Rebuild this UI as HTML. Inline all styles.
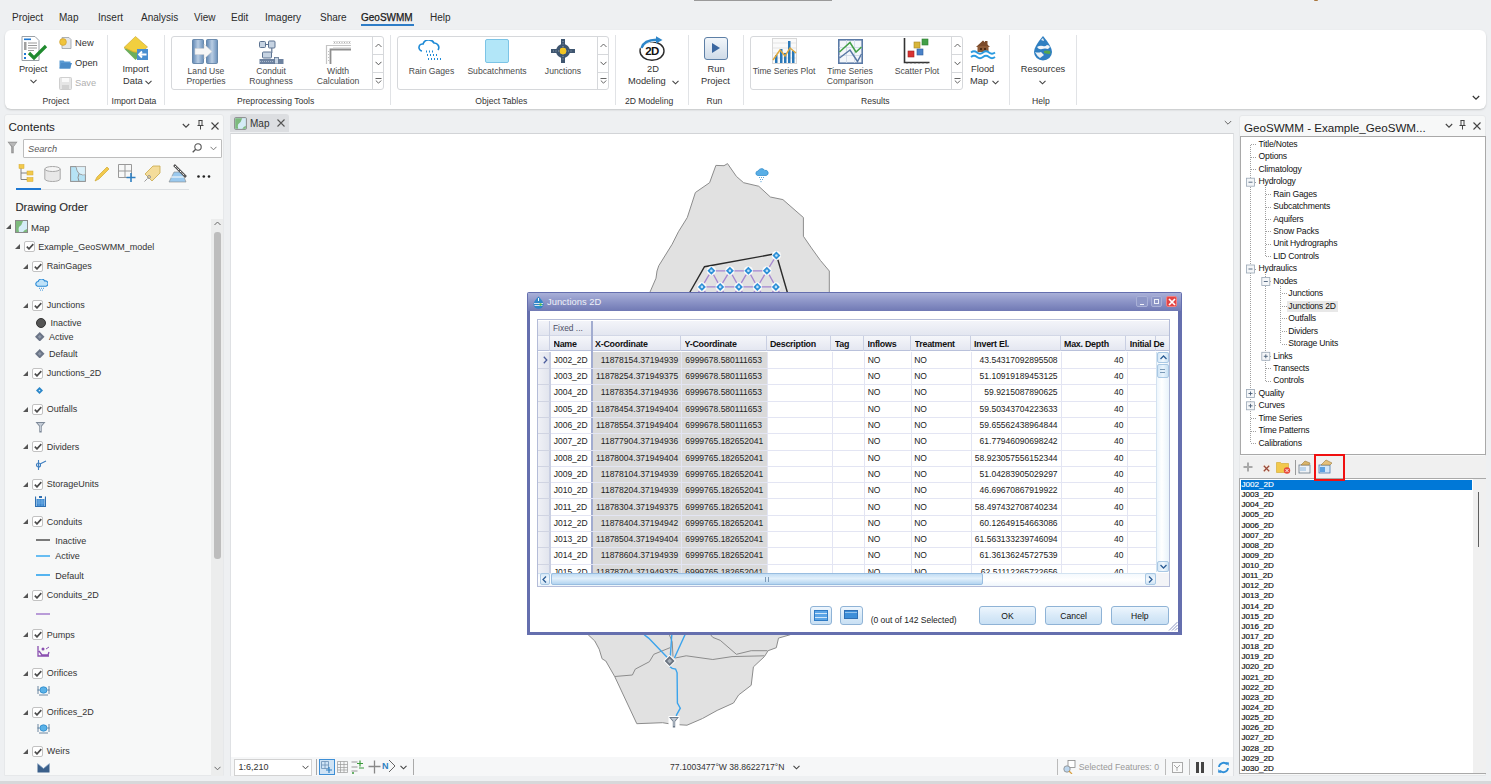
<!DOCTYPE html>
<html><head><meta charset="utf-8">
<style>
*{box-sizing:border-box;margin:0;padding:0}
html,body{width:1491px;height:784px;overflow:hidden;background:#eef0f2;font-family:"Liberation Sans",sans-serif;color:#333;position:relative}
.a{position:absolute;white-space:nowrap}
.menu{font-size:10px;color:#2a2a2a;top:12px}
.rib{left:5px;top:30px;width:1481px;height:78.5px;background:#fff;border-radius:6px;box-shadow:0 1px 2px rgba(0,0,0,.18)}
.gl{font-size:10px;color:#333;top:96px}
.bl{font-size:10px;color:#333;text-align:center}
.sep{width:1px;background:#e1e3e6;top:35px;height:70px}
.gal{border:1px solid #d6d8db;border-radius:3px;background:#fff;top:36px;height:54px}
.gsc{position:absolute;right:0;top:0;width:11px;height:52px;border-left:1px solid #d6d8db}
.gsc i{position:absolute;left:0;width:10px;height:1px;background:#d6d8db}
.gsc b{position:absolute;left:1px;width:9px;text-align:center;font-size:8px;font-weight:normal;color:#444}
.panel{background:#f5f6f7}
.lyr{font-size:10px;color:#333}
.cb{position:absolute;width:11px;height:11px;border:1px solid #9a9a9a;background:#fff;border-radius:1px}
.tri{position:absolute;width:0;height:0;border-left:5px solid transparent;border-bottom:5px solid #555}
.tree{font-family:"Liberation Sans",sans-serif;font-size:9.5px;color:#111}
.jl{font-size:9px;color:#222;font-family:"Liberation Sans",sans-serif}
</style></head>
<body>
<!-- top little scrollbar-like line -->
<div class="a" style="left:694px;top:0;width:138px;height:1px;background:#9a9a9a"></div>
<div class="a" style="left:1313.5px;top:0;width:4.5px;height:1.3px;background:#a9773f;border-radius:0 0 2px 2px"></div>

<div class="a" style="left:0;top:780.8px;width:1491px;height:3.2px;background:#d7d8da"></div>
<!-- MENU -->
<div class="a menu" style="left:12px">Project</div>
<div class="a menu" style="left:59px">Map</div>
<div class="a menu" style="left:98px">Insert</div>
<div class="a menu" style="left:141px">Analysis</div>
<div class="a menu" style="left:194px">View</div>
<div class="a menu" style="left:231px">Edit</div>
<div class="a menu" style="left:265px">Imagery</div>
<div class="a menu" style="left:320px">Share</div>
<div class="a menu" style="left:361px;color:#1a1a1a;-webkit-text-stroke:0.25px #1a1a1a">GeoSWMM</div>
<div class="a" style="left:361px;top:24px;width:53px;height:2px;background:#2e7dc7"></div>
<div class="a menu" style="left:430px">Help</div>

<!-- RIBBON -->
<div class="a rib"></div>

<!-- Project group -->
<svg class="a" style="left:21px;top:36px" width="27" height="25" viewBox="0 0 27 25">
 <path d="M1 0.5h13l4 4v20h-17z" fill="#fff" stroke="#9aa0a6"/>
 <rect x="3" y="2.5" width="7" height="1.6" fill="#1e78d2"/>
 <rect x="3" y="6" width="2.5" height="8" fill="#a0a0a0"/>
 <path d="M7 7h9M7 9.5h9M7 12h9M7 14.5h6" stroke="#9a9a9a" stroke-width="1"/>
 <rect x="3" y="17" width="2" height="2" fill="#1e78d2"/><rect x="3" y="21" width="2" height="2" fill="#1e78d2"/>
 <path d="M8 17l5 5 12-12" fill="none" stroke="#1f8a2e" stroke-width="3.2"/>
</svg>
<div class="a" style="left:19px;top:64px;font-size:9.3px;color:#333;letter-spacing:-0.1px">Project</div>
<svg class="a" style="left:30px;top:79px" width="7" height="5"><path d="M0.5 0.8l3 3 3-3" fill="none" stroke="#444" stroke-width="1.1"/></svg>
<svg class="a" style="left:59px;top:37px" width="13" height="12" viewBox="0 0 13 12">
 <path d="M3 0.5h7l2 2v9h-9z" fill="#e4e6e8" stroke="#9aa0a6" stroke-width="0.8"/>
 <circle cx="4" cy="5" r="3.4" fill="#f0c43c" stroke="#c9982a" stroke-width="0.6"/>
</svg>
<div class="a" style="left:75px;top:37.5px;font-size:9.3px;color:#333">New</div>
<svg class="a" style="left:59px;top:58px" width="13" height="11" viewBox="0 0 13 11">
 <path d="M0.5 2.5h4l1 1h6v7h-11z" fill="#5a9bd4"/><path d="M2 5h11l-2 5.5h-10.5z" fill="#4b8cc8"/>
</svg>
<div class="a" style="left:75px;top:58px;font-size:9.3px;color:#333">Open</div>
<svg class="a" style="left:59px;top:77px" width="13" height="13" viewBox="0 0 13 13">
 <rect x="0.5" y="0.5" width="12" height="12" rx="1" fill="#e6e6e6" stroke="#cfcfcf"/>
 <rect x="3" y="1" width="7" height="4" fill="#fafafa"/><rect x="3" y="8" width="7" height="4" fill="#d2d2d2"/>
</svg>
<div class="a" style="left:75px;top:78px;font-size:9.3px;color:#b0b0b0">Save</div>
<div class="a gl" style="left:42.5px;top:96.4px;font-size:8.6px">Project</div>
<div class="a sep" style="left:107px"></div>

<!-- Import Data -->
<svg class="a" style="left:123px;top:36px" width="26" height="25" viewBox="0 0 26 25">
 <path d="M1 12.5l11.5 11.5 3-3v-8.5h-5z" fill="#6cae5c"/>
 <path d="M1 11.5l11.5-11 12 10.5-6 5h-8z" fill="#f1cf3f" stroke="#caa52a" stroke-width="0.6"/>
 <path d="M1 11.5l11.5 5 6-1" fill="none" stroke="#d8b233" stroke-width="0.6"/>
 <rect x="14" y="13" width="11" height="11" fill="#4a8fd0"/>
 <path d="M23.5 18.5h-7.5M19 15.5l-3 3 3 3" stroke="#fff" stroke-width="1.8" fill="none"/>
</svg>
<div class="a" style="left:122.5px;top:64px;font-size:9.3px;color:#333">Import</div>
<div class="a" style="left:123px;top:75.5px;font-size:9.3px;color:#333">Data</div>
<svg class="a" style="left:145px;top:80px" width="7" height="5"><path d="M0.5 0.8l3 3 3-3" fill="none" stroke="#444" stroke-width="1.1"/></svg>
<div class="a gl" style="left:111.5px;top:96.4px;font-size:8.6px">Import Data</div>
<div class="a sep" style="left:164px"></div>

<!-- Preprocessing gallery -->
<div class="a gal" style="left:171px;width:213px"><div class="gsc"><i style="top:17px"></i><i style="top:35px"></i>
 <svg style="position:absolute;left:2px;top:6px" width="7" height="5"><path d="M0.5 4l3-3 3 3" fill="none" stroke="#555" stroke-width="0.9"/></svg>
 <svg style="position:absolute;left:2px;top:24px" width="7" height="5"><path d="M0.5 0.8l3 3 3-3" fill="none" stroke="#555" stroke-width="1"/></svg>
 <svg style="position:absolute;left:2px;top:41px" width="7" height="7"><path d="M0.5 0.5h6M0.8 2.5l2.7 2.7 2.7-2.7" fill="none" stroke="#555" stroke-width="0.9"/></svg>
</div></div>
<svg class="a" style="left:192px;top:38.5px" width="26" height="25" viewBox="0 0 26 25">
 <defs><linearGradient id="lu" x1="0" x2="1"><stop offset="0" stop-color="#5f86b3"/><stop offset="0.5" stop-color="#b9cde3"/><stop offset="1" stop-color="#6a90bb"/></linearGradient></defs>
 <rect x="0.5" y="0.5" width="11" height="24" rx="1" fill="url(#lu)" stroke="#54789f" stroke-width="0.8"/>
 <rect x="14.5" y="0.5" width="11" height="24" rx="1" fill="url(#lu)" stroke="#54789f" stroke-width="0.8"/>
 <path d="M3 9.5h9v-4.5l8 7.5-8 7.5v-4.5h-9z" fill="#f6f6f6" stroke="#d0d0d0" stroke-width="0.5"/>
</svg>
<div class="a bl" style="left:180px;width:52px;top:67px;font-size:8.6px;line-height:9.6px;color:#4a4a4a">Land Use<br>Properties</div>
<svg class="a" style="left:259px;top:39.5px" width="25" height="24" viewBox="0 0 25 24">
 <rect x="0.5" y="1.5" width="6" height="6" rx="1" fill="#c6d3e2" stroke="#5d7391" stroke-width="1"/>
 <rect x="9.5" y="1" width="6.5" height="7" rx="1" fill="#c6d3e2" stroke="#5d7391" stroke-width="1"/>
 <path d="M6.5 4.5h3M12.8 8v5M9 15h-3" stroke="#5d7391" stroke-width="1.2"/>
 <rect x="3.5" y="12" width="9" height="6" rx="1" fill="#c6d3e2" stroke="#5d7391" stroke-width="1"/>
 <rect x="0.5" y="19" width="24" height="5" fill="#6d82a0"/>
 <path d="M1 21.5h14" stroke="#b8c6d8" stroke-width="0.8" stroke-dasharray="1 1"/>
 <rect x="15.5" y="17.5" width="4" height="6.5" fill="#c6d3e2" stroke="#5d7391" stroke-width="0.8"/>
</svg>
<div class="a bl" style="left:245px;width:52px;top:67px;font-size:8.6px;line-height:9.6px;color:#4a4a4a">Conduit<br>Roughness</div>
<svg class="a" style="left:325px;top:39px" width="26" height="25" viewBox="0 0 26 25">
 <path d="M1.5 25V6.5H26" fill="none" stroke="#c4c4c4" stroke-width="1.2"/>
 <path d="M5.5 25V10.5H26" fill="none" stroke="#8e8e8e" stroke-width="1.8"/>
 <path d="M8 8.5H26" stroke="#e2e2e2" stroke-width="1"/>
 <path d="M8 2.5H26M8 4.5H26" stroke="#d6d6d6" stroke-width="0.8"/>
 <path d="M9 3.5h16" stroke="#9a9a9a" stroke-width="0.8" stroke-dasharray="1 1.5"/>
 <path d="M3.5 12v12" stroke="#a8a8a8" stroke-width="0.7" stroke-dasharray="1 2"/>
</svg>
<div class="a bl" style="left:312px;width:52px;top:67px;font-size:8.6px;line-height:9.6px;color:#4a4a4a">Width<br>Calculation</div>
<div class="a gl" style="left:237px;top:96.4px;font-size:8.6px">Preprocessing Tools</div>
<div class="a sep" style="left:390px"></div>

<!-- Object Tables gallery -->
<div class="a gal" style="left:397px;width:212px"><div class="gsc"><i style="top:17px"></i><i style="top:35px"></i>
 <svg style="position:absolute;left:2px;top:6px" width="7" height="5"><path d="M0.5 4l3-3 3 3" fill="none" stroke="#555" stroke-width="0.9"/></svg>
 <svg style="position:absolute;left:2px;top:24px" width="7" height="5"><path d="M0.5 0.8l3 3 3-3" fill="none" stroke="#555" stroke-width="1"/></svg>
 <svg style="position:absolute;left:2px;top:41px" width="7" height="7"><path d="M0.5 0.5h6M0.8 2.5l2.7 2.7 2.7-2.7" fill="none" stroke="#555" stroke-width="0.9"/></svg>
</div></div>
<svg class="a" style="left:418px;top:40px" width="26" height="22" viewBox="0 0 26 22">
 <path d="M4 11a3.5 3.5 0 0 1 1-7 6 6 0 0 1 11-1 4.5 4.5 0 0 1 4 7" fill="none" stroke="#1e8ad6" stroke-width="1.6"/>
 <path d="M8 11.5h1M11 11.5h1M14 11.5h1M9 15h1M12 15h1M15 15h1M18 15h1M10 19h1M13 19h1M16 19h1M19 19h1M22 19h1" stroke="#1e8ad6" stroke-width="1.8"/>
</svg>
<div class="a bl" style="left:404px;width:55px;top:67px;font-size:8.6px;line-height:9.6px;color:#4a4a4a">Rain Gages</div>
<div class="a" style="left:485px;top:39px;width:24px;height:24px;background:#b2e6f8;border:1px solid #7cc4e6;border-radius:2px"></div>
<div class="a bl" style="left:462px;width:70px;top:67px;font-size:8.6px;line-height:9.6px;color:#4a4a4a">Subcatchments</div>
<svg class="a" style="left:551px;top:39px" width="24" height="24" viewBox="0 0 24 24">
 <path d="M12 0v24M0 12h24" stroke="#3f5670" stroke-width="4"/>
 <circle cx="12" cy="12" r="7" fill="#3f5670"/>
 <circle cx="12" cy="12" r="3.2" fill="#f3c623"/>
 <path d="M12 2v20M2 12h20" stroke="#8ea0b4" stroke-width="1" stroke-dasharray="1 1.5"/>
 <circle cx="12" cy="12" r="3.2" fill="#f3c623"/>
</svg>
<div class="a bl" style="left:538px;width:50px;top:67px;font-size:8.6px;line-height:9.6px;color:#4a4a4a">Junctions</div>
<div class="a gl" style="left:475.3px;top:96.4px;font-size:8.6px">Object Tables</div>
<div class="a sep" style="left:615px"></div>

<!-- 2D modeling -->
<svg class="a" style="left:638px;top:35px" width="28" height="26" viewBox="0 0 28 26">
 <ellipse cx="14" cy="16" rx="12" ry="9.3" fill="#fff" stroke="#2b2b2b" stroke-width="1.4"/>
 <path d="M3.2 13.5q2-8.5 15-8.8" fill="none" stroke="#fff" stroke-width="4"/>
 <path d="M3.5 13q2.5-8 15-8.2" fill="none" stroke="#2e86c9" stroke-width="2.4"/>
 <path d="M18 1.2l6.5 3.8-6.5 3.6z" fill="#2e86c9"/>
 <text x="14" y="20.3" text-anchor="middle" font-family="Liberation Sans" font-weight="bold" font-size="11.5" fill="#111" letter-spacing="-0.5">2D</text>
</svg>
<div class="a" style="left:647px;top:64px;font-size:9.3px;color:#333">2D</div>
<div class="a" style="left:628px;top:75.5px;font-size:9.3px;color:#333">Modeling</div>
<svg class="a" style="left:672px;top:80px" width="7" height="5"><path d="M0.5 0.8l3 3 3-3" fill="none" stroke="#444" stroke-width="1.1"/></svg>
<div class="a gl" style="left:625px;top:96.4px;font-size:8.6px">2D Modeling</div>
<div class="a sep" style="left:688px"></div>

<!-- Run -->
<div class="a" style="left:704px;top:37px;width:24px;height:23px;border:1.6px solid #5d7fa6;border-radius:3px;background:linear-gradient(#f2f6fa,#cfdbe8)"></div>
<svg class="a" style="left:711px;top:42px" width="10" height="12"><path d="M1 1l8 5-8 5z" fill="#3b67a0"/></svg>
<div class="a" style="left:707.5px;top:64px;font-size:9.3px;color:#333">Run</div>
<div class="a" style="left:701px;top:75.5px;font-size:9.3px;color:#333">Project</div>
<div class="a gl" style="left:706.5px;top:96.4px;font-size:8.6px">Run</div>
<div class="a sep" style="left:743px"></div>

<!-- Results gallery -->
<div class="a gal" style="left:750px;width:213px"><div class="gsc"><i style="top:17px"></i><i style="top:35px"></i>
 <svg style="position:absolute;left:2px;top:6px" width="7" height="5"><path d="M0.5 4l3-3 3 3" fill="none" stroke="#555" stroke-width="0.9"/></svg>
 <svg style="position:absolute;left:2px;top:24px" width="7" height="5"><path d="M0.5 0.8l3 3 3-3" fill="none" stroke="#555" stroke-width="1"/></svg>
 <svg style="position:absolute;left:2px;top:41px" width="7" height="7"><path d="M0.5 0.5h6M0.8 2.5l2.7 2.7 2.7-2.7" fill="none" stroke="#555" stroke-width="0.9"/></svg>
</div></div>
<svg class="a" style="left:772px;top:38px" width="25" height="26" viewBox="0 0 25 26">
 <rect x="0.5" y="0.5" width="24" height="25" fill="#fafafa" stroke="#d8d8d8"/>
 <path d="M1 5h23M1 10h23M1 15h23M1 20h23" stroke="#e4e4e4"/>
 <rect x="3" y="17" width="2.5" height="8" fill="#2a78b8"/><rect x="8" y="11" width="2.5" height="14" fill="#2a78b8"/>
 <rect x="12" y="15" width="2.5" height="10" fill="#2a78b8"/><rect x="16" y="3" width="2.5" height="22" fill="#2a78b8"/>
 <rect x="20" y="13" width="2.5" height="12" fill="#2a78b8"/>
 <path d="M1 22l7-10 5 6 5-8 6 5" fill="none" stroke="#e0a83a" stroke-width="1.4"/>
</svg>
<div class="a bl" style="left:749px;width:70px;top:67px;font-size:8.6px;line-height:9.6px;color:#4a4a4a">Time Series Plot</div>
<svg class="a" style="left:838px;top:39px" width="25" height="25" viewBox="0 0 25 25">
 <rect x="0.8" y="0.8" width="23.4" height="23.4" fill="#f3f6fa" stroke="#5b7aa6" stroke-width="1.6"/>
 <path d="M1 8.5h23M1 16.5h23M8.5 1v23M16.5 1v23" stroke="#cdd8e6" stroke-width="0.8"/>
 <path d="M1.5 13L12 3.5 18 13 23.5 8" fill="none" stroke="#43a047" stroke-width="1.5"/>
 <path d="M1.5 19L12 11 19.5 22.5 23.5 15" fill="none" stroke="#5878a4" stroke-width="1.5"/>
</svg>
<div class="a bl" style="left:815px;width:70px;top:67px;font-size:8.6px;line-height:9.6px;color:#4a4a4a">Time Series<br>Comparison</div>
<svg class="a" style="left:903px;top:38px" width="27" height="26" viewBox="0 0 27 26">
 <path d="M1.5 0v24.5h25" fill="none" stroke="#333" stroke-width="1.6"/>
 <path d="M4 24v2M8 24v2M12 24v2M16 24v2M20 24v2M24 24v2" stroke="#555" stroke-width="0.6"/>
 <rect x="11" y="4" width="6" height="6" fill="#d8b63a" stroke="#a5882a" stroke-width="0.6"/>
 <rect x="19" y="1" width="6" height="6" fill="#43a047" stroke="#2e7d32" stroke-width="0.6"/>
 <rect x="5" y="13" width="6" height="6" fill="#d83232" stroke="#a02020" stroke-width="0.6"/>
 <rect x="14" y="11" width="6" height="6" fill="#4a82c8" stroke="#2e5f9e" stroke-width="0.6"/>
</svg>
<div class="a bl" style="left:882px;width:70px;top:67px;font-size:8.6px;line-height:9.6px;color:#4a4a4a">Scatter Plot</div>
<!-- Flood map -->
<svg class="a" style="left:970px;top:38px" width="26" height="24" viewBox="0 0 26 24">
 <path d="M6 9l7-6.5 7 6.5z" fill="#7b4a2a"/>
 <rect x="7.5" y="8" width="11" height="6" fill="#8d5a36"/>
 <rect x="15" y="3" width="2.5" height="4" fill="#7b4a2a"/>
 <rect x="10" y="10" width="2" height="2" fill="#4a2a14"/><rect x="14" y="10" width="2" height="2" fill="#4a2a14"/>
 <path d="M1 14.5q3-2.5 6 0t6 0 6 0 6 0M1 19q3-2.5 6 0t6 0 6 0 6 0" fill="none" stroke="#2b9be0" stroke-width="1.8"/>
</svg>
<div class="a" style="left:971px;top:64px;font-size:9.3px;color:#333">Flood</div>
<div class="a" style="left:970px;top:75.5px;font-size:9.3px;color:#333">Map</div>
<svg class="a" style="left:991.5px;top:80px" width="7" height="5"><path d="M0.5 0.8l3 3 3-3" fill="none" stroke="#444" stroke-width="1.1"/></svg>
<div class="a gl" style="left:861px;top:96.4px;font-size:8.6px">Results</div>
<div class="a sep" style="left:1009px"></div>
<!-- Resources -->
<svg class="a" style="left:1032px;top:35px" width="22" height="26" viewBox="0 0 22 26">
 <path d="M11 1q9 10.5 9 16a9 8.5 0 0 1-18 0q0-5.5 9-16z" fill="#2f7fc1"/>
 <path d="M5 12q3-2 6-1 2 1 4-1 2 0 3 2l-2 2q-3-1-6 0-3 1-5-2z" fill="#f2f5f8"/>
 <path d="M3 17q3 1 6 0l3 3-4 3q-3-2-5-6z" fill="#eaf0f4"/>
 <path d="M12 16q3-1 6 0 1 2 0 3-3 0-6-1z" fill="#56a64e"/>
 <path d="M9 5l2-2 1 3z" fill="#e8eef3"/>
</svg>
<div class="a bl" style="left:1017px;width:52px;top:64px;font-size:9.3px">Resources</div>
<svg class="a" style="left:1039px;top:80px" width="7" height="5"><path d="M0.5 0.8l3 3 3-3" fill="none" stroke="#444" stroke-width="1.1"/></svg>
<div class="a gl" style="left:1032px;top:96.4px;font-size:8.6px">Help</div>
<div class="a sep" style="left:1076px"></div>
<svg class="a" style="left:1472px;top:95px" width="8" height="6"><path d="M0.8 1l3.2 3.2 3.2-3.2" fill="none" stroke="#333" stroke-width="1.2"/></svg>

<!-- CONTENTS -->
<div class="a" style="left:4px;top:114.2px;width:220px;height:662px;background:#f7f8f8;border-radius:3px 3px 0 0;border:1px solid #e6e8ea"></div>
<div class="a" style="left:8.5px;top:120.2px;font-size:11.6px;color:#222">Contents</div>
<svg class="a" style="left:182px;top:123px" width="8" height="6"><path d="M0.8 1l3.2 3.2 3.2-3.2" fill="none" stroke="#444" stroke-width="1.1"/></svg>
<svg class="a" style="left:197px;top:120px" width="7" height="10"><path d="M1.5 0.5h4M2 0.5v5h3v-5M0.5 5.5h6M3.5 5.5v4" fill="none" stroke="#444" stroke-width="1"/></svg>
<svg class="a" style="left:211px;top:122px" width="8" height="8"><path d="M0.5 0.5l7 7M7.5 0.5l-7 7" stroke="#444" stroke-width="1.1"/></svg>
<svg class="a" style="left:6.5px;top:141px" width="11" height="13"><path d="M0.5 0.8h10l-3.8 5v6.5h-2.4v-6.5z" fill="#8a8a8a"/><path d="M1.5 1.5h8l-3 4v6h-1v-6z" fill="#b8b8b8"/></svg>
<div class="a" style="left:23px;top:138.5px;width:199px;height:19px;background:#fff;border:1px solid #bdbdbd;border-radius:1px"></div>
<div class="a" style="left:28px;top:143.6px;font-size:9.2px;font-style:italic;color:#5a5a5a">Search</div>
<svg class="a" style="left:192px;top:143px" width="10" height="10"><circle cx="6" cy="4" r="3.2" fill="none" stroke="#555" stroke-width="1.1"/><path d="M3.7 6.3l-3 3" stroke="#555" stroke-width="1.3"/></svg>
<svg class="a" style="left:210px;top:146px" width="7" height="5"><path d="M0.5 0.8l3 3 3-3" fill="none" stroke="#777" stroke-width="1"/></svg>
<svg class="a" style="left:18px;top:164px" width="20" height="19" viewBox="0 0 20 19">
<rect x="1" y="0.5" width="5" height="4" fill="#f2c94c" stroke="#d4a82a" stroke-width="0.5"/><path d="M3 4.5v11h6M3 9h6" fill="none" stroke="#777" stroke-width="0.9"/>
<rect x="9" y="7" width="6" height="4" fill="#f2c94c" stroke="#d4a82a" stroke-width="0.5"/><rect x="9" y="13.5" width="6" height="4" fill="#f2c94c" stroke="#d4a82a" stroke-width="0.5"/></svg>
<svg class="a" style="left:44px;top:166px" width="17" height="16" viewBox="0 0 17 16"><path d="M0.8 3v10a7.7 2.5 0 0 0 15.4 0v-10" fill="#e8e8e8" stroke="#a8a8a8"/><ellipse cx="8.5" cy="3" rx="7.7" ry="2.5" fill="#f4f4f4" stroke="#a8a8a8"/></svg>
<svg class="a" style="left:69.5px;top:165.5px" width="16" height="16" viewBox="0 0 16 16"><rect x="0.6" y="0.6" width="14.8" height="14.8" fill="#b6e3f5" stroke="#909090"/><path d="M6 0.6q1 5 3 7 4 2 6 1M9 7.6q-2 4 0 7.8" fill="none" stroke="#909090"/><path d="M6 0.6h9.4v8q-2 1-6-1q-2-2-3.4-7z" fill="#fff" opacity="0.5"/></svg>
<svg class="a" style="left:94px;top:166px" width="16" height="16"><path d="M1 15l2-4 10-10 2 2-10 10z" fill="#f2c94c" stroke="#c9a020" stroke-width="0.6"/></svg>
<svg class="a" style="left:118px;top:164px" width="19" height="19"><path d="M0.5 0.5h13v13h-13zM0.5 7h13M7 0.5v13" fill="none" stroke="#999"/><path d="M13 9v9M8.5 13.5h9" stroke="#2f7fc1" stroke-width="1.6"/></svg>
<svg class="a" style="left:144px;top:165px" width="17" height="17"><path d="M1 9l8-8h7v7l-8 8z" fill="#f4dc9a" stroke="#c9a84a" stroke-width="0.8"/><circle cx="5" cy="12" r="1.5" fill="none" stroke="#999"/><path d="M0.5 16.5l3-3" stroke="#999"/></svg>
<svg class="a" style="left:168px;top:164px" width="19" height="19"><path d="M1 18l5-10h8l4 10z" fill="#9ac9ee" stroke="#888" stroke-width="0.6"/><path d="M3 13h13" stroke="#fff"/><path d="M6 1l12 12" stroke="#555" stroke-width="2.5"/><path d="M7 2l10 10" stroke="#fff" stroke-width="1" stroke-dasharray="2 1.5"/></svg>
<svg class="a" style="left:197px;top:175px" width="14" height="3"><circle cx="1.5" cy="1.5" r="1.3" fill="#222"/><circle cx="6.8" cy="1.5" r="1.3" fill="#222"/><circle cx="12" cy="1.5" r="1.3" fill="#222"/></svg>
<div class="a" style="left:15.5px;top:188.5px;width:173px;height:1px;background:#dcdfe2"></div>
<div class="a" style="left:15.5px;top:187.8px;width:25px;height:2.2px;background:#1e78d2"></div>
<div class="a" style="left:15.5px;top:201.2px;font-size:11.3px;color:#2b2b2b;-webkit-text-stroke:0.12px #2b2b2b;letter-spacing:-0.1px">Drawing Order</div>
<div class="a" style="left:211px;top:219px;width:12px;height:557px;background:#eceded"></div>
<svg class="a" style="left:214px;top:221px" width="7" height="5"><path d="M0.5 4l3-3 3 3" fill="none" stroke="#666" stroke-width="1"/></svg>
<div class="a" style="left:214px;top:232px;width:6.5px;height:327px;background:#bdbdbd;border-radius:3px"></div>
<svg class="a" style="left:214px;top:766px" width="7" height="5"><path d="M0.5 0.8l3 3 3-3" fill="none" stroke="#666" stroke-width="1"/></svg>
<svg class="a" style="left:5.8px;top:223.5px" width="5" height="5"><path d="M5 0v5h-5z" fill="#555"/></svg>
<svg class="a" style="left:15px;top:220px" width="13" height="13"><rect x="0.5" y="0.5" width="12" height="12" fill="#d4ecf7" stroke="#888"/><path d="M1 1h7q-1 4-4 6-1 2 0 5h-3z" fill="#7dba7d"/><path d="M12 12h-4q1-2 4-3z" fill="#7dba7d"/></svg>
<div class="a" style="left:31px;top:222px;font-size:9.6px;color:#333">Map</div>
<svg class="a" style="left:14.5px;top:244.0px" width="5" height="5"><path d="M5 0v5h-5z" fill="#555"/></svg><div class="a" style="left:23.5px;top:241.0px;width:11px;height:11px;border:1px solid #c2c2c2;border-radius:2px;background:#fff"></div><svg class="a" style="left:25.5px;top:243.0px" width="8" height="7"><path d="M0.8 3.6l2.2 2.3 4.3-4.8" fill="none" stroke="#4a4a4a" stroke-width="1.6"/></svg><div class="a" style="left:38.3px;top:241.5px;font-size:9.0px;color:#333">Example_GeoSWMM_model</div>
<svg class="a" style="left:23.0px;top:263.9px" width="5" height="5"><path d="M5 0v5h-5z" fill="#555"/></svg><div class="a" style="left:32px;top:260.9px;width:11px;height:11px;border:1px solid #c2c2c2;border-radius:2px;background:#fff"></div><svg class="a" style="left:34px;top:262.9px" width="8" height="7"><path d="M0.8 3.6l2.2 2.3 4.3-4.8" fill="none" stroke="#4a4a4a" stroke-width="1.6"/></svg><div class="a" style="left:46.8px;top:261.4px;font-size:9.0px;color:#333">RainGages</div>
<svg class="a" style="left:35px;top:279px" width="13" height="12"><path d="M2.5 7.2a2.4 2.4 0 0 1 0.6-4.7 3.6 3.6 0 0 1 6.6-0.5 2.5 2.5 0 0 1 1.3 5.2z" fill="#bfe2f8" stroke="#2a8ad6" stroke-width="1.1"/><path d="M4.5 8.8v1M6.5 8.8v1M8.5 8.8v1M5.5 10.6v1M7.5 10.6v1" stroke="#2a8ad6" stroke-width="0.9"/></svg>
<svg class="a" style="left:23.0px;top:302.5px" width="5" height="5"><path d="M5 0v5h-5z" fill="#555"/></svg><div class="a" style="left:32px;top:299.5px;width:11px;height:11px;border:1px solid #c2c2c2;border-radius:2px;background:#fff"></div><svg class="a" style="left:34px;top:301.5px" width="8" height="7"><path d="M0.8 3.6l2.2 2.3 4.3-4.8" fill="none" stroke="#4a4a4a" stroke-width="1.6"/></svg><div class="a" style="left:46.8px;top:300.0px;font-size:9.0px;color:#333">Junctions</div>
<div class="a" style="left:35.6px;top:318px;width:10.4px;height:10.4px;border-radius:50%;background:#555;border:1px solid #333"></div>
<div class="a" style="left:50.4px;top:318.3px;font-size:9.0px;color:#333">Inactive</div>
<svg class="a" style="left:35px;top:331.9px" width="9.5" height="9.5" viewBox="0 0 10 10"><path d="M5 0l5 5-5 5-5-5z" fill="#6b7587"/><path d="M5 3l2 2-2 2-2-2z" fill="#8e98a8"/></svg>
<div class="a" style="left:49px;top:331.7px;font-size:9.0px;color:#333">Active</div>
<svg class="a" style="left:35px;top:348.9px" width="9.5" height="9.5" viewBox="0 0 10 10"><path d="M5 0l5 5-5 5-5-5z" fill="#6b7587"/><path d="M5 3l2 2-2 2-2-2z" fill="#8e98a8"/></svg>
<div class="a" style="left:49px;top:348.6px;font-size:9.0px;color:#333">Default</div>
<svg class="a" style="left:23.0px;top:370.5px" width="5" height="5"><path d="M5 0v5h-5z" fill="#555"/></svg><div class="a" style="left:32px;top:367.5px;width:11px;height:11px;border:1px solid #c2c2c2;border-radius:2px;background:#fff"></div><svg class="a" style="left:34px;top:369.5px" width="8" height="7"><path d="M0.8 3.6l2.2 2.3 4.3-4.8" fill="none" stroke="#4a4a4a" stroke-width="1.6"/></svg><div class="a" style="left:46.8px;top:368.0px;font-size:9.0px;color:#333">Junctions_2D</div>
<svg class="a" style="left:35.5px;top:387px" width="7" height="7" viewBox="0 0 10 10"><path d="M5 0l5 5-5 5-5-5z" fill="#2a86c8"/><circle cx="5" cy="5" r="1.2" fill="#d8eefc"/></svg>
<svg class="a" style="left:23.0px;top:406.9px" width="5" height="5"><path d="M5 0v5h-5z" fill="#555"/></svg><div class="a" style="left:32px;top:403.9px;width:11px;height:11px;border:1px solid #c2c2c2;border-radius:2px;background:#fff"></div><svg class="a" style="left:34px;top:405.9px" width="8" height="7"><path d="M0.8 3.6l2.2 2.3 4.3-4.8" fill="none" stroke="#4a4a4a" stroke-width="1.6"/></svg><div class="a" style="left:46.8px;top:404.4px;font-size:9.0px;color:#333">Outfalls</div>
<svg class="a" style="left:35px;top:421px" width="11" height="12"><path d="M0.5 1h10l-3.8 4.5v6h-2.4v-6z" fill="#7c8897"/><path d="M2.5 2h6l-2.5 3v5h-1v-5z" fill="#c4ccd6"/></svg>
<svg class="a" style="left:23.0px;top:444.3px" width="5" height="5"><path d="M5 0v5h-5z" fill="#555"/></svg><div class="a" style="left:32px;top:441.3px;width:11px;height:11px;border:1px solid #c2c2c2;border-radius:2px;background:#fff"></div><svg class="a" style="left:34px;top:443.3px" width="8" height="7"><path d="M0.8 3.6l2.2 2.3 4.3-4.8" fill="none" stroke="#4a4a4a" stroke-width="1.6"/></svg><div class="a" style="left:46.8px;top:441.8px;font-size:9.0px;color:#333">Dividers</div>
<svg class="a" style="left:35px;top:459px" width="12" height="12"><circle cx="3.5" cy="6" r="2" fill="none" stroke="#3f7fc0" stroke-width="1.2"/><path d="M3.5 1v10M5 5l6-3" stroke="#3f7fc0" stroke-width="1.1"/></svg>
<svg class="a" style="left:23.0px;top:481.5px" width="5" height="5"><path d="M5 0v5h-5z" fill="#555"/></svg><div class="a" style="left:32px;top:478.5px;width:11px;height:11px;border:1px solid #c2c2c2;border-radius:2px;background:#fff"></div><svg class="a" style="left:34px;top:480.5px" width="8" height="7"><path d="M0.8 3.6l2.2 2.3 4.3-4.8" fill="none" stroke="#4a4a4a" stroke-width="1.6"/></svg><div class="a" style="left:46.8px;top:479.0px;font-size:9.0px;color:#333">StorageUnits</div>
<svg class="a" style="left:35px;top:496px" width="11" height="11"><path d="M0.5 0.5v10h10v-10" fill="none" stroke="#2f6fb0" stroke-width="1.2"/><rect x="1.5" y="3" width="8" height="7" fill="#3d88d0"/><path d="M1.5 5h8M1.5 7h8M4 3v7M7 3v7" stroke="#8cc0ec" stroke-width="0.5"/><rect x="4" y="0" width="3" height="2" fill="#2f6fb0"/></svg>
<svg class="a" style="left:23.0px;top:519.0px" width="5" height="5"><path d="M5 0v5h-5z" fill="#555"/></svg><div class="a" style="left:32px;top:516.0px;width:11px;height:11px;border:1px solid #c2c2c2;border-radius:2px;background:#fff"></div><svg class="a" style="left:34px;top:518.0px" width="8" height="7"><path d="M0.8 3.6l2.2 2.3 4.3-4.8" fill="none" stroke="#4a4a4a" stroke-width="1.6"/></svg><div class="a" style="left:46.8px;top:516.5px;font-size:9.0px;color:#333">Conduits</div>
<div class="a" style="left:36px;top:539px;width:13.5px;height:2px;background:#7a7a7a"></div>
<div class="a" style="left:55.3px;top:536.0px;font-size:9.0px;color:#333">Inactive</div>
<div class="a" style="left:36px;top:555px;width:13.5px;height:2px;background:#68bdf2"></div>
<div class="a" style="left:55.3px;top:551.0px;font-size:9.0px;color:#333">Active</div>
<div class="a" style="left:36px;top:574px;width:13.5px;height:2px;background:#55b4f0"></div>
<div class="a" style="left:55.3px;top:570.6px;font-size:9.0px;color:#333">Default</div>
<svg class="a" style="left:23.0px;top:592.5px" width="5" height="5"><path d="M5 0v5h-5z" fill="#555"/></svg><div class="a" style="left:32px;top:589.5px;width:11px;height:11px;border:1px solid #c2c2c2;border-radius:2px;background:#fff"></div><svg class="a" style="left:34px;top:591.5px" width="8" height="7"><path d="M0.8 3.6l2.2 2.3 4.3-4.8" fill="none" stroke="#4a4a4a" stroke-width="1.6"/></svg><div class="a" style="left:46.8px;top:590.0px;font-size:9.0px;color:#333">Conduits_2D</div>
<div class="a" style="left:36px;top:613px;width:13.5px;height:2px;background:#b99cd8"></div>
<svg class="a" style="left:23.0px;top:632.0px" width="5" height="5"><path d="M5 0v5h-5z" fill="#555"/></svg><div class="a" style="left:32px;top:629.0px;width:11px;height:11px;border:1px solid #c2c2c2;border-radius:2px;background:#fff"></div><svg class="a" style="left:34px;top:631.0px" width="8" height="7"><path d="M0.8 3.6l2.2 2.3 4.3-4.8" fill="none" stroke="#4a4a4a" stroke-width="1.6"/></svg><div class="a" style="left:46.8px;top:629.5px;font-size:9.0px;color:#333">Pumps</div>
<svg class="a" style="left:37px;top:645px" width="13" height="12"><path d="M1 1v10h11M2 6l3 4h6l1-3" fill="none" stroke="#8a4fb0" stroke-width="1.3"/><circle cx="6" cy="4" r="1.5" fill="#8a4fb0"/><path d="M9 4l3-2" stroke="#8a4fb0"/></svg>
<svg class="a" style="left:23.0px;top:670.9px" width="5" height="5"><path d="M5 0v5h-5z" fill="#555"/></svg><div class="a" style="left:32px;top:667.9px;width:11px;height:11px;border:1px solid #c2c2c2;border-radius:2px;background:#fff"></div><svg class="a" style="left:34px;top:669.9px" width="8" height="7"><path d="M0.8 3.6l2.2 2.3 4.3-4.8" fill="none" stroke="#4a4a4a" stroke-width="1.6"/></svg><div class="a" style="left:46.8px;top:668.4px;font-size:9.0px;color:#333">Orifices</div>
<svg class="a" style="left:37px;top:684.5px" width="13" height="11"><ellipse cx="6.5" cy="5" rx="3.6" ry="3.2" fill="#5ab2e8" stroke="#2a86c8" stroke-width="0.8"/><path d="M0.5 5h2M10.5 5h2M1 1v8M12 1v8M2 10h9" stroke="#4a6a8a" stroke-width="0.8" fill="none"/></svg>
<svg class="a" style="left:23.0px;top:709.5px" width="5" height="5"><path d="M5 0v5h-5z" fill="#555"/></svg><div class="a" style="left:32px;top:706.5px;width:11px;height:11px;border:1px solid #c2c2c2;border-radius:2px;background:#fff"></div><svg class="a" style="left:34px;top:708.5px" width="8" height="7"><path d="M0.8 3.6l2.2 2.3 4.3-4.8" fill="none" stroke="#4a4a4a" stroke-width="1.6"/></svg><div class="a" style="left:46.8px;top:707.0px;font-size:9.0px;color:#333">Orifices_2D</div>
<svg class="a" style="left:37px;top:723.1px" width="13" height="11"><ellipse cx="6.5" cy="5" rx="3.6" ry="3.2" fill="#5ab2e8" stroke="#2a86c8" stroke-width="0.8"/><path d="M0.5 5h2M10.5 5h2M1 1v8M12 1v8M2 10h9" stroke="#4a6a8a" stroke-width="0.8" fill="none"/></svg>
<svg class="a" style="left:23.0px;top:748.9px" width="5" height="5"><path d="M5 0v5h-5z" fill="#555"/></svg><div class="a" style="left:32px;top:745.9px;width:11px;height:11px;border:1px solid #c2c2c2;border-radius:2px;background:#fff"></div><svg class="a" style="left:34px;top:747.9px" width="8" height="7"><path d="M0.8 3.6l2.2 2.3 4.3-4.8" fill="none" stroke="#4a4a4a" stroke-width="1.6"/></svg><div class="a" style="left:46.8px;top:746.4px;font-size:9.0px;color:#333">Weirs</div>
<svg class="a" style="left:37px;top:763px" width="13" height="10"><path d="M0.5 0.5l6 5 6-5v9h-12z" fill="#3a5f8a"/><path d="M0.5 0.5l6 5 6-5" fill="none" stroke="#7fa0c4" stroke-width="0.7"/></svg>
<!-- MAP VIEW -->
<div class="a" style="left:229.6px;top:114.2px;width:59px;height:18.3px;background:#dcdee1;border-radius:3px 3px 0 0"></div>
<svg class="a" style="left:234px;top:116.5px" width="13" height="13"><rect x="0.6" y="0.6" width="11.8" height="11.8" rx="1" fill="#d4ecf7" stroke="#808080" stroke-width="0.9"/><path d="M1.2 1.2h7q-1 4-4 6-1 2 0 4.6h-3z" fill="#7dba7d"/><path d="M11.8 11.8h-3.5q1-2 3.5-3z" fill="#7dba7d"/></svg>
<div class="a" style="left:250px;top:118px;font-size:10px;color:#333">Map</div>
<svg class="a" style="left:276.5px;top:119px" width="8" height="8"><path d="M0.5 0.5l7 7M7.5 0.5l-7 7" stroke="#555" stroke-width="1.1"/></svg>
<svg class="a" style="left:1224px;top:120px" width="8" height="6"><path d="M0.8 1l3.2 3.2 3.2-3.2" fill="none" stroke="#666" stroke-width="1"/></svg>
<div class="a" style="left:229.6px;top:132.5px;width:1004px;height:643.5px;background:#fff;border:1px solid #dfe1e4;border-top:1px solid #d2d4d7"></div>
<div class="a" style="left:230.5px;top:756.8px;width:1002px;height:19px;background:#f6f7f8"></div>
<div class="a" style="left:234px;top:758.5px;width:78px;height:17px;background:#fff;border:1px solid #d2d2d2"></div>
<div class="a" style="left:238.5px;top:761.5px;font-size:9px;color:#333">1:6,210</div>
<svg class="a" style="left:302px;top:765px" width="7" height="5"><path d="M0.5 0.8l3 3 3-3" fill="none" stroke="#444" stroke-width="1"/></svg>
<div class="a" style="left:315.5px;top:759px;width:1px;height:16px;background:#aaa"></div>
<div class="a" style="left:319px;top:758.5px;width:15.5px;height:16.5px;background:#cfe3f5;border:1px solid #3d8fd6"></div>
<svg class="a" style="left:321px;top:761px" width="12" height="12"><path d="M0.5 0.5h7v7h-7zM0.5 4h7M4 0.5v7" fill="none" stroke="#6a8fb5" stroke-width="0.8"/><path d="M8 6v6M5 9h6" stroke="#2f7fc1" stroke-width="1.2"/></svg>
<svg class="a" style="left:337px;top:761px" width="11" height="12"><path d="M0.5 0.5h10v11h-10zM0.5 3.5h10M0.5 6.5h10M0.5 9h10M3.5 0.5v11M7 0.5v11" fill="none" stroke="#999" stroke-width="0.7"/></svg>
<svg class="a" style="left:351px;top:760px" width="14" height="14"><path d="M0.5 2h6M0.5 7h6M0.5 11h6" stroke="#999" stroke-width="1.2"/><path d="M9 0.5v6M6 3.5h6M8 8h5" stroke="#3a9a3a" stroke-width="1.2"/><circle cx="2" cy="13" r="1" fill="#3a9a3a"/></svg>
<svg class="a" style="left:367.5px;top:760px" width="13" height="14"><path d="M6.5 0.5v13M0.5 6.5h12" stroke="#888" stroke-width="1.3"/></svg>
<div class="a" style="left:382px;top:761px;font-size:9px;font-weight:bold;color:#2f7fc1">N</div>
<svg class="a" style="left:388px;top:759px" width="9" height="15"><path d="M1 1l6 6-6 6" fill="none" stroke="#666" stroke-width="1"/></svg>
<svg class="a" style="left:400px;top:765px" width="7" height="5"><path d="M0.5 0.8l3 3 3-3" fill="none" stroke="#444" stroke-width="1.1"/></svg>
<div class="a" style="left:413px;top:759px;width:1px;height:16px;background:#aaa"></div>
<div class="a" style="left:670px;top:762px;font-size:8.6px;color:#333">77.1003477°W 38.8622717°N</div>
<svg class="a" style="left:792.5px;top:765px" width="7" height="5"><path d="M0.5 0.8l3 3 3-3" fill="none" stroke="#444" stroke-width="1.1"/></svg>
<div class="a" style="left:1057px;top:759px;width:1px;height:16px;background:#bbb"></div>
<svg class="a" style="left:1062px;top:760px" width="14" height="14"><rect x="6" y="0.5" width="7" height="7" fill="#fff" stroke="#888" stroke-width="0.8"/><circle cx="5" cy="9" r="3.2" fill="#bcd6ee" stroke="#888" stroke-width="0.8"/><path d="M7 11l3 3" stroke="#d9a040" stroke-width="1.2"/></svg>
<div class="a" style="left:1078.8px;top:761.8px;font-size:8.7px;color:#999">Selected Features: 0</div>
<div class="a" style="left:1164.5px;top:759px;width:1px;height:16px;background:#bbb"></div>
<svg class="a" style="left:1172px;top:762px" width="11" height="11"><rect x="0.5" y="0.5" width="10" height="10" fill="#fafafa" stroke="#aaa"/><path d="M2 3l3 3v3M8 3l-3 3" stroke="#aaa" fill="none"/></svg>
<div class="a" style="left:1188.7px;top:759px;width:1px;height:16px;background:#bbb"></div>
<div class="a" style="left:1195.5px;top:762px;width:3px;height:11px;background:#444"></div><div class="a" style="left:1201px;top:762px;width:3px;height:11px;background:#444"></div>
<div class="a" style="left:1211.5px;top:759px;width:1px;height:16px;background:#bbb"></div>
<svg class="a" style="left:1216.5px;top:760.5px" width="13" height="13"><path d="M2 6a4.5 4.5 0 0 1 8-2.5M11 7a4.5 4.5 0 0 1-8 2.5" fill="none" stroke="#2f8fd8" stroke-width="1.8"/><path d="M8.5 1l3.5 0.5-0.5 3.5zM4.5 12l-3.5-0.5 0.5-3.5z" fill="#2f8fd8"/></svg>
<!-- MAP GRAPHICS -->
<svg class="a" style="left:0;top:0" width="1491" height="784" viewBox="0 0 1491 784">
<polygon points="649.8,292.5 656,278.2 657,271 658.8,265.7 672.1,244.3 678.4,231.8 687.3,217.5 695.4,192.5 709.6,182.7 715.9,165.4 724,165.7 727.5,163.6 736.4,176.4 743.6,182.7 758.75,186.25 770.4,197 782.9,199.6 803.4,217.5 803.4,236.25 811.4,247.9 820.4,260.4 829.3,271 829.3,292.5 829.3,400 790.3,634.7 790.3,634.7 778.5,638.1 776.3,647.7 768.1,650.7 764.4,656.6 753.4,666.9 751.2,685.3 738.6,695 733.5,703 717.2,710.4 702.5,718.5 687,725.2 673,724.4 662.6,722.7 636.8,723.7 614.7,676.5 605.8,661 602.1,658.8 599.2,649.2 594.8,641 588.1,634.7 600,400" fill="#e1e1e1" stroke="#8c8c8c" stroke-width="1"/>
<polyline points="614.7,676.5 632.4,675 635.3,669.1 649.4,661.7 653.8,654.3 670,647.7" fill="none" stroke="#8c8c8c" stroke-width="1"/>
<polyline points="669.3,634.7 672.2,641.8 673,656.6" fill="none" stroke="#8c8c8c" stroke-width="1"/>
<polyline points="675.2,658 686.2,655.8 712.8,659.5 732,656.6 764.4,655.8" fill="none" stroke="#8c8c8c" stroke-width="1"/>
<polyline points="710.6,634.7 712.8,637.4 720.2,640.3 736.4,654.3 751.2,650.7 767.4,650.7" fill="none" stroke="#8c8c8c" stroke-width="1"/>
<polyline points="644.2,634.7 648.6,638.1 667.1,657.3" fill="none" stroke="#3aa3ec" stroke-width="1.4"/>
<polyline points="671.8,634.7 670.3,656.6" fill="none" stroke="#3aa3ec" stroke-width="1.4"/>
<polyline points="685,634.7 674.4,658" fill="none" stroke="#3aa3ec" stroke-width="1.4"/>
<polyline points="669.3,666.2 672.2,668.4 675.6,669.1 677.1,672.8 677.4,703 680.3,708.2 676.6,714.8 675.9,717.8" fill="none" stroke="#3aa3ec" stroke-width="1.4"/>
<polyline points="689.7,292.5 704.5,266.7 772.6,254.3" fill="none" stroke="#2a2a2a" stroke-width="1.4"/>
<polyline points="777.8,259.5 787.4,292.5" fill="none" stroke="#2a2a2a" stroke-width="1.4"/>
<polyline points="711.4,270.8 729.9,270.8 748.4,270.8 766.9,270.8" fill="none" stroke="#a586cf" stroke-width="1.3"/>
<polyline points="701.9,286.9 720.2,286.9 738.9,286.9 757.4,286.9 775.9,286.9" fill="none" stroke="#a586cf" stroke-width="1.3"/>
<polyline points="701.9,286.9 711.4,270.8 720.2,286.9 729.9,270.8 738.9,286.9 748.4,270.8 757.4,286.9 766.9,270.8 775.9,286.9" fill="none" stroke="#a586cf" stroke-width="1.3"/>
<polyline points="766.9,270.8 776.4,255.5" fill="none" stroke="#a586cf" stroke-width="1.3"/>
<path d="M699.9,289.9 L696.9,294.9 M703.9,289.9 L706.9,294.9" stroke="#a586cf" stroke-width="1.2"/>
<path d="M718.2,289.9 L715.2,294.9 M722.2,289.9 L725.2,294.9" stroke="#a586cf" stroke-width="1.2"/>
<path d="M736.9,289.9 L733.9,294.9 M740.9,289.9 L743.9,294.9" stroke="#a586cf" stroke-width="1.2"/>
<path d="M755.4,289.9 L752.4,294.9 M759.4,289.9 L762.4,294.9" stroke="#a586cf" stroke-width="1.2"/>
<path d="M773.9,289.9 L770.9,294.9 M777.9,289.9 L780.9,294.9" stroke="#a586cf" stroke-width="1.2"/>
<circle cx="711.4" cy="270.8" r="4.6" fill="#fff" opacity="0.9"/><path d="M711.4,266.8 L715.4,270.8 L711.4,274.8 L707.4,270.8z" fill="#2b8fd6"/><circle cx="711.4" cy="270.8" r="1.3" fill="#bfe3fb"/>
<circle cx="729.9" cy="270.8" r="4.6" fill="#fff" opacity="0.9"/><path d="M729.9,266.8 L733.9,270.8 L729.9,274.8 L725.9,270.8z" fill="#2b8fd6"/><circle cx="729.9" cy="270.8" r="1.3" fill="#bfe3fb"/>
<circle cx="748.4" cy="270.8" r="4.6" fill="#fff" opacity="0.9"/><path d="M748.4,266.8 L752.4,270.8 L748.4,274.8 L744.4,270.8z" fill="#2b8fd6"/><circle cx="748.4" cy="270.8" r="1.3" fill="#bfe3fb"/>
<circle cx="766.9" cy="270.8" r="4.6" fill="#fff" opacity="0.9"/><path d="M766.9,266.8 L770.9,270.8 L766.9,274.8 L762.9,270.8z" fill="#2b8fd6"/><circle cx="766.9" cy="270.8" r="1.3" fill="#bfe3fb"/>
<circle cx="701.9" cy="286.9" r="4.6" fill="#fff" opacity="0.9"/><path d="M701.9,282.9 L705.9,286.9 L701.9,290.9 L697.9,286.9z" fill="#2b8fd6"/><circle cx="701.9" cy="286.9" r="1.3" fill="#bfe3fb"/>
<circle cx="720.2" cy="286.9" r="4.6" fill="#fff" opacity="0.9"/><path d="M720.2,282.9 L724.2,286.9 L720.2,290.9 L716.2,286.9z" fill="#2b8fd6"/><circle cx="720.2" cy="286.9" r="1.3" fill="#bfe3fb"/>
<circle cx="738.9" cy="286.9" r="4.6" fill="#fff" opacity="0.9"/><path d="M738.9,282.9 L742.9,286.9 L738.9,290.9 L734.9,286.9z" fill="#2b8fd6"/><circle cx="738.9" cy="286.9" r="1.3" fill="#bfe3fb"/>
<circle cx="757.4" cy="286.9" r="4.6" fill="#fff" opacity="0.9"/><path d="M757.4,282.9 L761.4,286.9 L757.4,290.9 L753.4,286.9z" fill="#2b8fd6"/><circle cx="757.4" cy="286.9" r="1.3" fill="#bfe3fb"/>
<circle cx="775.9" cy="286.9" r="4.6" fill="#fff" opacity="0.9"/><path d="M775.9,282.9 L779.9,286.9 L775.9,290.9 L771.9,286.9z" fill="#2b8fd6"/><circle cx="775.9" cy="286.9" r="1.3" fill="#bfe3fb"/>
<circle cx="776.4" cy="255.5" r="4.6" fill="#fff" opacity="0.9"/><path d="M776.4,251.5 L780.4,255.5 L776.4,259.5 L772.4,255.5z" fill="#2b8fd6"/><circle cx="776.4" cy="255.5" r="1.3" fill="#bfe3fb"/>
<rect x="665.1" y="656.5" width="9" height="9" fill="#fff" transform="rotate(45 669.6 661)"/>
<path d="M669.6,656 L674.6,661 L669.6,666 L664.6,661z" fill="#6b7480"/><path d="M669.6,658.5 L672,661 L669.6,663.5 L667.2,661z" fill="#a8b0ba"/>
<rect x="668.5" y="716" width="11" height="12" fill="#fff"/>
<path d="M669,717 h10 l-3.8,4.5 v6 h-2.4 v-6z" fill="#6f7b8a"/><path d="M671,718 h6 l-2.4,3 v5 h-1.2 v-5z" fill="#c0c8d2"/>
<path d="M757.5,175.5 a2.3,2.3 0 0 1 0.7-4.5 a3.6,3.6 0 0 1 6.5-0.6 a2.4,2.4 0 0 1 1.6,5.1z" fill="#58aee6" stroke="#2a86c8" stroke-width="0.7"/><path d="M759.5,177 v1 M761.5,177 v1 M763.5,177 v1 M760.5,179 v1 M762.5,179 v1 M761,181 v1.2" stroke="#3a90d0" stroke-width="0.8"/></svg>
<!-- RIGHT PANEL -->
<div class="a" style="left:1238.8px;top:114.6px;width:247.6px;height:661.4px;background:#f7f8f8;border:1px solid #e6e8ea;border-radius:3px 3px 0 0"></div>
<div class="a" style="left:1244px;top:121px;font-size:11.6px;color:#222">GeoSWMM - Example_GeoSWM...</div>
<svg class="a" style="left:1444.5px;top:123px" width="8" height="6"><path d="M0.8 1l3.2 3.2 3.2-3.2" fill="none" stroke="#444" stroke-width="1.1"/></svg>
<svg class="a" style="left:1459px;top:120px" width="7" height="10"><path d="M1.5 0.5h4M2 0.5v5h3v-5M0.5 5.5h6M3.5 5.5v4" fill="none" stroke="#444" stroke-width="1"/></svg>
<svg class="a" style="left:1473px;top:121.5px" width="8" height="8"><path d="M0.5 0.5l7 7M7.5 0.5l-7 7" stroke="#444" stroke-width="1.1"/></svg>
<div class="a" style="left:1239.5px;top:136.4px;width:246.5px;height:319px;background:#fff;border:1px solid #a9a9a9"></div>
<div class="a" style="left:1287px;top:300.5px;width:51px;height:11px;background:#e8e8e8"></div>
<svg class="a" style="left:0;top:0" width="1491" height="784">
<path d="M1250.5 145 V443 M1265.5 187 V257 M1265.5 274 V381 M1280.5 286 V344" stroke="#a0a0a0" stroke-width="1" stroke-dasharray="1 1" fill="none"/>
<path d="M1251 144.5 H1257" stroke="#a0a0a0" stroke-width="1" stroke-dasharray="1 1"/>
<path d="M1251 157.5 H1257" stroke="#a0a0a0" stroke-width="1" stroke-dasharray="1 1"/>
<path d="M1251 169.5 H1257" stroke="#a0a0a0" stroke-width="1" stroke-dasharray="1 1"/>
<path d="M1251 182.5 H1257" stroke="#a0a0a0" stroke-width="1" stroke-dasharray="1 1"/>
<rect x="1246.5" y="178.2" width="8" height="8" fill="#f4f6f8" stroke="#9aa7b5" stroke-width="0.8"/>
<path d="M1248.5 182.2 H1252.5" stroke="#4a5f78" stroke-width="0.9"/>
<path d="M1266 194.5 H1272" stroke="#a0a0a0" stroke-width="1" stroke-dasharray="1 1"/>
<path d="M1266 207.5 H1272" stroke="#a0a0a0" stroke-width="1" stroke-dasharray="1 1"/>
<path d="M1266 219.5 H1272" stroke="#a0a0a0" stroke-width="1" stroke-dasharray="1 1"/>
<path d="M1266 231.5 H1272" stroke="#a0a0a0" stroke-width="1" stroke-dasharray="1 1"/>
<path d="M1266 244.5 H1272" stroke="#a0a0a0" stroke-width="1" stroke-dasharray="1 1"/>
<path d="M1266 256.5 H1272" stroke="#a0a0a0" stroke-width="1" stroke-dasharray="1 1"/>
<path d="M1251 269.5 H1257" stroke="#a0a0a0" stroke-width="1" stroke-dasharray="1 1"/>
<rect x="1246.5" y="265.0" width="8" height="8" fill="#f4f6f8" stroke="#9aa7b5" stroke-width="0.8"/>
<path d="M1248.5 269.0 H1252.5" stroke="#4a5f78" stroke-width="0.9"/>
<path d="M1266 281.5 H1272" stroke="#a0a0a0" stroke-width="1" stroke-dasharray="1 1"/>
<rect x="1261.8" y="277.5" width="8" height="8" fill="#f4f6f8" stroke="#9aa7b5" stroke-width="0.8"/>
<path d="M1263.8 281.5 H1267.8" stroke="#4a5f78" stroke-width="0.9"/>
<path d="M1282 293.5 H1287" stroke="#a0a0a0" stroke-width="1" stroke-dasharray="1 1"/>
<path d="M1282 306.5 H1287" stroke="#a0a0a0" stroke-width="1" stroke-dasharray="1 1"/>
<path d="M1282 318.5 H1287" stroke="#a0a0a0" stroke-width="1" stroke-dasharray="1 1"/>
<path d="M1282 331.5 H1287" stroke="#a0a0a0" stroke-width="1" stroke-dasharray="1 1"/>
<path d="M1282 344.5 H1287" stroke="#a0a0a0" stroke-width="1" stroke-dasharray="1 1"/>
<path d="M1266 356.5 H1272" stroke="#a0a0a0" stroke-width="1" stroke-dasharray="1 1"/>
<rect x="1261.8" y="352.3" width="8" height="8" fill="#f4f6f8" stroke="#9aa7b5" stroke-width="0.8"/>
<path d="M1263.8 356.3 H1267.8" stroke="#4a5f78" stroke-width="0.9"/>
<path d="M1265.8 354.3 V358.3" stroke="#4a5f78" stroke-width="0.9"/>
<path d="M1266 368.5 H1272" stroke="#a0a0a0" stroke-width="1" stroke-dasharray="1 1"/>
<path d="M1266 381.5 H1272" stroke="#a0a0a0" stroke-width="1" stroke-dasharray="1 1"/>
<path d="M1251 393.5 H1257" stroke="#a0a0a0" stroke-width="1" stroke-dasharray="1 1"/>
<rect x="1246.5" y="389.5" width="8" height="8" fill="#f4f6f8" stroke="#9aa7b5" stroke-width="0.8"/>
<path d="M1248.5 393.5 H1252.5" stroke="#4a5f78" stroke-width="0.9"/>
<path d="M1250.5 391.5 V395.5" stroke="#4a5f78" stroke-width="0.9"/>
<path d="M1251 405.5 H1257" stroke="#a0a0a0" stroke-width="1" stroke-dasharray="1 1"/>
<rect x="1246.5" y="401.8" width="8" height="8" fill="#f4f6f8" stroke="#9aa7b5" stroke-width="0.8"/>
<path d="M1248.5 405.8 H1252.5" stroke="#4a5f78" stroke-width="0.9"/>
<path d="M1250.5 403.8 V407.8" stroke="#4a5f78" stroke-width="0.9"/>
<path d="M1251 418.5 H1257" stroke="#a0a0a0" stroke-width="1" stroke-dasharray="1 1"/>
<path d="M1251 431.5 H1257" stroke="#a0a0a0" stroke-width="1" stroke-dasharray="1 1"/>
<path d="M1251 443.5 H1257" stroke="#a0a0a0" stroke-width="1" stroke-dasharray="1 1"/>
</svg>
<div class="a tree" style="left:1258.6px;top:138.7px;font-size:8.6px;color:#111;letter-spacing:-0.18px">Title/Notes</div>
<div class="a tree" style="left:1258.6px;top:151.3px;font-size:8.6px;color:#111;letter-spacing:-0.18px">Options</div>
<div class="a tree" style="left:1258.6px;top:163.7px;font-size:8.6px;color:#111;letter-spacing:-0.18px">Climatology</div>
<div class="a tree" style="left:1258.6px;top:176.4px;font-size:8.6px;color:#111;letter-spacing:-0.18px">Hydrology</div>
<div class="a tree" style="left:1273.3px;top:188.7px;font-size:8.6px;color:#111;letter-spacing:-0.18px">Rain Gages</div>
<div class="a tree" style="left:1273.3px;top:201.2px;font-size:8.6px;color:#111;letter-spacing:-0.18px">Subcatchments</div>
<div class="a tree" style="left:1273.3px;top:213.6px;font-size:8.6px;color:#111;letter-spacing:-0.18px">Aquifers</div>
<div class="a tree" style="left:1273.3px;top:226.0px;font-size:8.6px;color:#111;letter-spacing:-0.18px">Snow Packs</div>
<div class="a tree" style="left:1273.3px;top:238.4px;font-size:8.6px;color:#111;letter-spacing:-0.18px">Unit Hydrographs</div>
<div class="a tree" style="left:1273.3px;top:251.0px;font-size:8.6px;color:#111;letter-spacing:-0.18px">LID Controls</div>
<div class="a tree" style="left:1258.6px;top:263.2px;font-size:8.6px;color:#111;letter-spacing:-0.18px">Hydraulics</div>
<div class="a tree" style="left:1273.3px;top:275.7px;font-size:8.6px;color:#111;letter-spacing:-0.18px">Nodes</div>
<div class="a tree" style="left:1288.3px;top:288.1px;font-size:8.6px;color:#111;letter-spacing:-0.18px">Junctions</div>
<div class="a tree" style="left:1288.3px;top:300.7px;font-size:8.6px;color:#111;letter-spacing:-0.18px">Junctions 2D</div>
<div class="a tree" style="left:1288.3px;top:313.0px;font-size:8.6px;color:#111;letter-spacing:-0.18px">Outfalls</div>
<div class="a tree" style="left:1288.3px;top:325.7px;font-size:8.6px;color:#111;letter-spacing:-0.18px">Dividers</div>
<div class="a tree" style="left:1288.3px;top:338.2px;font-size:8.6px;color:#111;letter-spacing:-0.18px">Storage Units</div>
<div class="a tree" style="left:1273.3px;top:350.5px;font-size:8.6px;color:#111;letter-spacing:-0.18px">Links</div>
<div class="a tree" style="left:1273.3px;top:363.1px;font-size:8.6px;color:#111;letter-spacing:-0.18px">Transects</div>
<div class="a tree" style="left:1273.3px;top:375.4px;font-size:8.6px;color:#111;letter-spacing:-0.18px">Controls</div>
<div class="a tree" style="left:1258.6px;top:387.7px;font-size:8.6px;color:#111;letter-spacing:-0.18px">Quality</div>
<div class="a tree" style="left:1258.6px;top:400.0px;font-size:8.6px;color:#111;letter-spacing:-0.18px">Curves</div>
<div class="a tree" style="left:1258.6px;top:412.7px;font-size:8.6px;color:#111;letter-spacing:-0.18px">Time Series</div>
<div class="a tree" style="left:1258.6px;top:425.2px;font-size:8.6px;color:#111;letter-spacing:-0.18px">Time Patterns</div>
<div class="a tree" style="left:1258.6px;top:437.5px;font-size:8.6px;color:#111;letter-spacing:-0.18px">Calibrations</div>
<div class="a" style="left:1239.5px;top:455.5px;width:246.5px;height:23px;background:#f0f0f0"></div>
<svg class="a" style="left:1243px;top:462px" width="10" height="10"><path d="M5 0.5v9M0.5 5h9" stroke="#a8a8a8" stroke-width="2"/></svg>
<svg class="a" style="left:1261.5px;top:463.5px" width="9" height="9"><circle cx="4.5" cy="4.5" r="4.3" fill="#f4ece4"/><path d="M1.8 1.8l5.4 5.4M7.2 1.8l-5.4 5.4" stroke="#9a4a3a" stroke-width="1.3"/></svg>
<svg class="a" style="left:1276px;top:460px" width="15" height="14"><path d="M0.5 2.5h4l1 1h7v9h-12z" fill="#f2c94c" stroke="#d2a628" stroke-width="0.6"/><circle cx="11" cy="10.5" r="3.2" fill="#e74c3c"/><path d="M9.5 9l3 3M12.5 9l-3 3" stroke="#fff" stroke-width="0.9"/></svg>
<div class="a" style="left:1294.5px;top:460px;width:1px;height:15px;background:#9a9a9a"></div>
<svg class="a" style="left:1298px;top:460px" width="14" height="14"><rect x="1" y="5" width="11" height="8" fill="#eef2f6" stroke="#6a7a8a" stroke-width="0.8"/><path d="M3 5l4-4 5 2-1 2z" fill="#d9b46a" stroke="#9a7a3a" stroke-width="0.6"/><rect x="2" y="7" width="6" height="4" fill="#bcd4ea"/></svg>
<svg class="a" style="left:1318px;top:459px" width="15" height="15"><rect x="1" y="6" width="11" height="8" fill="#d2e6f8" stroke="#4a7ab0" stroke-width="0.8"/><path d="M3 6l5-5 6 3-2 2z" fill="#e5c07a" stroke="#9a7a3a" stroke-width="0.6"/><rect x="2" y="8" width="5" height="5" fill="#5aa0e0"/></svg>

<div class="a" style="left:1239.4px;top:478.4px;width:247px;height:296px;background:#fff;border:1px solid #a9a9a9"></div>
<div class="a" style="left:1473px;top:479.4px;width:12.5px;height:294px;background:#f0f0f0"></div>
<div class="a" style="left:1241px;top:479.8px;width:230.6px;height:10px;background:#0078d7"></div>
<div class="a" style="left:1478px;top:492.4px;width:1.3px;height:55px;background:#606060"></div>
<div class="a" style="left:1241.4px;top:479.9px;font-size:8.1px;color:#fff;line-height:9px;-webkit-text-stroke:0.15px #fff">J002_2D</div>
<div class="a" style="left:1241.4px;top:490.0px;font-size:8.1px;color:#151515;line-height:9px;-webkit-text-stroke:0.2px #151515">J003_2D</div>
<div class="a" style="left:1241.4px;top:500.2px;font-size:8.1px;color:#151515;line-height:9px;-webkit-text-stroke:0.2px #151515">J004_2D</div>
<div class="a" style="left:1241.4px;top:510.3px;font-size:8.1px;color:#151515;line-height:9px;-webkit-text-stroke:0.2px #151515">J005_2D</div>
<div class="a" style="left:1241.4px;top:520.5px;font-size:8.1px;color:#151515;line-height:9px;-webkit-text-stroke:0.2px #151515">J006_2D</div>
<div class="a" style="left:1241.4px;top:530.6px;font-size:8.1px;color:#151515;line-height:9px;-webkit-text-stroke:0.2px #151515">J007_2D</div>
<div class="a" style="left:1241.4px;top:540.7px;font-size:8.1px;color:#151515;line-height:9px;-webkit-text-stroke:0.2px #151515">J008_2D</div>
<div class="a" style="left:1241.4px;top:550.9px;font-size:8.1px;color:#151515;line-height:9px;-webkit-text-stroke:0.2px #151515">J009_2D</div>
<div class="a" style="left:1241.4px;top:561.0px;font-size:8.1px;color:#151515;line-height:9px;-webkit-text-stroke:0.2px #151515">J010_2D</div>
<div class="a" style="left:1241.4px;top:571.2px;font-size:8.1px;color:#151515;line-height:9px;-webkit-text-stroke:0.2px #151515">J011_2D</div>
<div class="a" style="left:1241.4px;top:581.3px;font-size:8.1px;color:#151515;line-height:9px;-webkit-text-stroke:0.2px #151515">J012_2D</div>
<div class="a" style="left:1241.4px;top:591.4px;font-size:8.1px;color:#151515;line-height:9px;-webkit-text-stroke:0.2px #151515">J013_2D</div>
<div class="a" style="left:1241.4px;top:601.6px;font-size:8.1px;color:#151515;line-height:9px;-webkit-text-stroke:0.2px #151515">J014_2D</div>
<div class="a" style="left:1241.4px;top:611.7px;font-size:8.1px;color:#151515;line-height:9px;-webkit-text-stroke:0.2px #151515">J015_2D</div>
<div class="a" style="left:1241.4px;top:621.9px;font-size:8.1px;color:#151515;line-height:9px;-webkit-text-stroke:0.2px #151515">J016_2D</div>
<div class="a" style="left:1241.4px;top:632.0px;font-size:8.1px;color:#151515;line-height:9px;-webkit-text-stroke:0.2px #151515">J017_2D</div>
<div class="a" style="left:1241.4px;top:642.1px;font-size:8.1px;color:#151515;line-height:9px;-webkit-text-stroke:0.2px #151515">J018_2D</div>
<div class="a" style="left:1241.4px;top:652.3px;font-size:8.1px;color:#151515;line-height:9px;-webkit-text-stroke:0.2px #151515">J019_2D</div>
<div class="a" style="left:1241.4px;top:662.4px;font-size:8.1px;color:#151515;line-height:9px;-webkit-text-stroke:0.2px #151515">J020_2D</div>
<div class="a" style="left:1241.4px;top:672.6px;font-size:8.1px;color:#151515;line-height:9px;-webkit-text-stroke:0.2px #151515">J021_2D</div>
<div class="a" style="left:1241.4px;top:682.7px;font-size:8.1px;color:#151515;line-height:9px;-webkit-text-stroke:0.2px #151515">J022_2D</div>
<div class="a" style="left:1241.4px;top:692.8px;font-size:8.1px;color:#151515;line-height:9px;-webkit-text-stroke:0.2px #151515">J023_2D</div>
<div class="a" style="left:1241.4px;top:703.0px;font-size:8.1px;color:#151515;line-height:9px;-webkit-text-stroke:0.2px #151515">J024_2D</div>
<div class="a" style="left:1241.4px;top:713.1px;font-size:8.1px;color:#151515;line-height:9px;-webkit-text-stroke:0.2px #151515">J025_2D</div>
<div class="a" style="left:1241.4px;top:723.3px;font-size:8.1px;color:#151515;line-height:9px;-webkit-text-stroke:0.2px #151515">J026_2D</div>
<div class="a" style="left:1241.4px;top:733.4px;font-size:8.1px;color:#151515;line-height:9px;-webkit-text-stroke:0.2px #151515">J027_2D</div>
<div class="a" style="left:1241.4px;top:743.5px;font-size:8.1px;color:#151515;line-height:9px;-webkit-text-stroke:0.2px #151515">J028_2D</div>
<div class="a" style="left:1241.4px;top:753.7px;font-size:8.1px;color:#151515;line-height:9px;-webkit-text-stroke:0.2px #151515">J029_2D</div>
<div class="a" style="left:1241.4px;top:763.8px;font-size:8.1px;color:#151515;line-height:9px;-webkit-text-stroke:0.2px #151515">J030_2D</div>
<!-- DIALOG -->
<div class="a" style="left:526.5px;top:292.3px;width:655px;height:342.7px;background:#656fae;border-radius:2px 2px 0 0"></div>
<div class="a" style="left:527.5px;top:293.3px;width:653px;height:17.7px;background:linear-gradient(#a9b0d8,#8e96c8 45%,#7079b4)"></div>
<div class="a" style="left:530px;top:311px;width:648px;height:320.5px;background:#fff"></div>
<svg class="a" style="left:532.5px;top:295.5px" width="11" height="13" viewBox="0 0 11 13">
<path d="M5.5 0.5q5 5 5 8a5 4.2 0 0 1-10 0q0-3 5-8z" fill="#2f86c8"/>
<path d="M1 7.5h9M1.5 9.5h8" stroke="#d8e4ee" stroke-width="1"/><circle cx="7.5" cy="8.5" r="1.2" fill="#4cc04c"/><path d="M5.5 2v3" stroke="#fff" stroke-width="1"/></svg>
<div class="a" style="left:547px;top:296.3px;font-size:9.4px;color:#eef0f8">Junctions 2D</div>
<div class="a" style="left:1136.4px;top:296.2px;width:11.2px;height:11.2px;background:#8d96c6;border:1px solid #a9b0d6;border-radius:2px"></div>
<div class="a" style="left:1139.5px;top:303.5px;width:4px;height:1.5px;background:#f4f4fa"></div>
<div class="a" style="left:1151px;top:296.2px;width:11.2px;height:11.2px;background:#8d96c6;border:1px solid #a9b0d6;border-radius:2px"></div>
<div class="a" style="left:1153.8px;top:299px;width:5.6px;height:5.2px;border:1px solid #eef0f8;border-top-width:1.6px"></div>
<div class="a" style="left:1165.7px;top:296.2px;width:11.7px;height:11.2px;background:#e34444;border:1px solid #f08080;border-radius:2px"></div>
<svg class="a" style="left:1167.5px;top:297.8px" width="8" height="8"><path d="M1 1l6 6M7 1l-6 6" stroke="#fff" stroke-width="1.7"/></svg>
<div class="a" style="left:537.4px;top:319.4px;width:632.6px;height:267.4px;background:#fff;border:1px solid #b4bcd8"></div>
<div class="a" style="left:538.4px;top:320.5px;width:630.6px;height:15.800000000000011px;background:linear-gradient(#f3f4f9,#e3e6f0);border-bottom:1px solid #d2d7e6"></div>
<div class="a" style="left:539.5px;top:320.5px;width:10.700000000000045px;height:15.800000000000011px;border-right:1px solid #c9cfe2"></div>
<div class="a" style="left:553px;top:322.5px;font-size:8.4px;color:#4c4f66">Fixed ...</div>
<div class="a" style="left:538.4px;top:336.3px;width:630.6px;height:15.199999999999989px;background:linear-gradient(#f5f6fa,#e4e7f1);border-bottom:1px solid #b9c1db"></div>
<div class="a" style="left:539.5px;top:336.3px;width:10.700000000000045px;height:15.199999999999989px;border-right:1px solid #c9cfe2"></div>
<div class="a" style="left:550.2px;top:336.3px;width:41.5px;height:15.199999999999989px;border-right:1px solid #c9cfe2"></div>
<div class="a" style="left:553.5px;top:338.5px;font-size:8.9px;font-weight:bold;color:#111;letter-spacing:-0.25px;overflow:hidden;width:38.5px">Name</div>
<div class="a" style="left:591.7px;top:336.3px;width:89.5px;height:15.199999999999989px;border-right:1px solid #c9cfe2"></div>
<div class="a" style="left:595.0px;top:338.5px;font-size:8.9px;font-weight:bold;color:#111;letter-spacing:-0.25px;overflow:hidden;width:86.5px">X-Coordinate</div>
<div class="a" style="left:681.2px;top:336.3px;width:85.39999999999998px;height:15.199999999999989px;border-right:1px solid #c9cfe2"></div>
<div class="a" style="left:684.5px;top:338.5px;font-size:8.9px;font-weight:bold;color:#111;letter-spacing:-0.25px;overflow:hidden;width:82.39999999999998px">Y-Coordinate</div>
<div class="a" style="left:766.6px;top:336.3px;width:64.89999999999998px;height:15.199999999999989px;border-right:1px solid #c9cfe2"></div>
<div class="a" style="left:769.9px;top:338.5px;font-size:8.9px;font-weight:bold;color:#111;letter-spacing:-0.25px;overflow:hidden;width:61.89999999999998px">Description</div>
<div class="a" style="left:831.5px;top:336.3px;width:32.700000000000045px;height:15.199999999999989px;border-right:1px solid #c9cfe2"></div>
<div class="a" style="left:834.8px;top:338.5px;font-size:8.9px;font-weight:bold;color:#111;letter-spacing:-0.25px;overflow:hidden;width:29.700000000000045px">Tag</div>
<div class="a" style="left:864.2px;top:336.3px;width:47.09999999999991px;height:15.199999999999989px;border-right:1px solid #c9cfe2"></div>
<div class="a" style="left:867.5px;top:338.5px;font-size:8.9px;font-weight:bold;color:#111;letter-spacing:-0.25px;overflow:hidden;width:44.09999999999991px">Inflows</div>
<div class="a" style="left:911.3px;top:336.3px;width:59.5px;height:15.199999999999989px;border-right:1px solid #c9cfe2"></div>
<div class="a" style="left:914.5999999999999px;top:338.5px;font-size:8.9px;font-weight:bold;color:#111;letter-spacing:-0.25px;overflow:hidden;width:56.5px">Treatment</div>
<div class="a" style="left:970.8px;top:336.3px;width:89.90000000000009px;height:15.199999999999989px;border-right:1px solid #c9cfe2"></div>
<div class="a" style="left:974.0999999999999px;top:338.5px;font-size:8.9px;font-weight:bold;color:#111;letter-spacing:-0.25px;overflow:hidden;width:86.90000000000009px">Invert El.</div>
<div class="a" style="left:1060.7px;top:336.3px;width:65.79999999999995px;height:15.199999999999989px;border-right:1px solid #c9cfe2"></div>
<div class="a" style="left:1064.0px;top:338.5px;font-size:8.9px;font-weight:bold;color:#111;letter-spacing:-0.25px;overflow:hidden;width:62.799999999999955px">Max. Depth</div>
<div class="a" style="left:1126.5px;top:336.3px;width:29.799999999999955px;height:15.199999999999989px;border-right:1px solid #c9cfe2"></div>
<div class="a" style="left:1129.8px;top:338.5px;font-size:8.9px;font-weight:bold;color:#111;letter-spacing:-0.25px;overflow:hidden;width:39.2px">Initial De</div>
<div class="a" style="left:538.4px;top:351.5px;width:11.8px;height:221.20000000000005px;background:linear-gradient(90deg,#f0f1f6,#e2e5ee);border-right:1px solid #c9cfe2"></div>
<div class="a" style="left:592.5px;top:351.5px;width:174.10000000000002px;height:221.20000000000005px;background:#dadada"></div>
<div class="a" style="left:590.9px;top:320.5px;width:1.8px;height:252.20000000000005px;background:#a2acd0"></div>
<div class="a" style="left:538.4px;top:351.5px;width:617.9px;height:221.20000000000005px;overflow:hidden">
<div style="position:absolute;left:0;top:16.5px;width:617.9px;height:1px;background:#e3e5f3"></div>
<div style="position:absolute;left:0;top:16.5px;width:11.8px;height:1px;background:#d0d4e2"></div>
<div style="position:absolute;left:15.3px;top:3.3px;font-size:8.5px;color:#222;white-space:nowrap">J002_2D</div>
<div style="position:absolute;right:478.1px;top:3.3px;font-size:8.5px;color:#222;white-space:nowrap">11878154.37194939</div>
<div style="position:absolute;left:146.8px;top:3.3px;font-size:8.5px;color:#222;white-space:nowrap">6999678.580111653</div>
<div style="position:absolute;left:329.3px;top:3.3px;font-size:8.5px;color:#222;white-space:nowrap">NO</div>
<div style="position:absolute;left:375.8px;top:3.3px;font-size:8.5px;color:#222;white-space:nowrap">NO</div>
<div style="position:absolute;right:98.7px;top:3.3px;font-size:8.5px;color:#222;white-space:nowrap">43.54317092895508</div>
<div style="position:absolute;right:32.8px;top:3.3px;font-size:8.5px;color:#222;white-space:nowrap">40</div>
<div style="position:absolute;left:0;top:32.8px;width:617.9px;height:1px;background:#e3e5f3"></div>
<div style="position:absolute;left:0;top:32.8px;width:11.8px;height:1px;background:#d0d4e2"></div>
<div style="position:absolute;left:15.3px;top:19.6px;font-size:8.5px;color:#222;white-space:nowrap">J003_2D</div>
<div style="position:absolute;right:478.1px;top:19.6px;font-size:8.5px;color:#222;white-space:nowrap">11878254.371949375</div>
<div style="position:absolute;left:146.8px;top:19.6px;font-size:8.5px;color:#222;white-space:nowrap">6999678.580111653</div>
<div style="position:absolute;left:329.3px;top:19.6px;font-size:8.5px;color:#222;white-space:nowrap">NO</div>
<div style="position:absolute;left:375.8px;top:19.6px;font-size:8.5px;color:#222;white-space:nowrap">NO</div>
<div style="position:absolute;right:98.7px;top:19.6px;font-size:8.5px;color:#222;white-space:nowrap">51.10919189453125</div>
<div style="position:absolute;right:32.8px;top:19.6px;font-size:8.5px;color:#222;white-space:nowrap">40</div>
<div style="position:absolute;left:0;top:49.1px;width:617.9px;height:1px;background:#e3e5f3"></div>
<div style="position:absolute;left:0;top:49.1px;width:11.8px;height:1px;background:#d0d4e2"></div>
<div style="position:absolute;left:15.3px;top:35.8px;font-size:8.5px;color:#222;white-space:nowrap">J004_2D</div>
<div style="position:absolute;right:478.1px;top:35.8px;font-size:8.5px;color:#222;white-space:nowrap">11878354.37194936</div>
<div style="position:absolute;left:146.8px;top:35.8px;font-size:8.5px;color:#222;white-space:nowrap">6999678.580111653</div>
<div style="position:absolute;left:329.3px;top:35.8px;font-size:8.5px;color:#222;white-space:nowrap">NO</div>
<div style="position:absolute;left:375.8px;top:35.8px;font-size:8.5px;color:#222;white-space:nowrap">NO</div>
<div style="position:absolute;right:98.7px;top:35.8px;font-size:8.5px;color:#222;white-space:nowrap">59.9215087890625</div>
<div style="position:absolute;right:32.8px;top:35.8px;font-size:8.5px;color:#222;white-space:nowrap">40</div>
<div style="position:absolute;left:0;top:65.4px;width:617.9px;height:1px;background:#e3e5f3"></div>
<div style="position:absolute;left:0;top:65.4px;width:11.8px;height:1px;background:#d0d4e2"></div>
<div style="position:absolute;left:15.3px;top:52.2px;font-size:8.5px;color:#222;white-space:nowrap">J005_2D</div>
<div style="position:absolute;right:478.1px;top:52.2px;font-size:8.5px;color:#222;white-space:nowrap">11878454.371949404</div>
<div style="position:absolute;left:146.8px;top:52.2px;font-size:8.5px;color:#222;white-space:nowrap">6999678.580111653</div>
<div style="position:absolute;left:329.3px;top:52.2px;font-size:8.5px;color:#222;white-space:nowrap">NO</div>
<div style="position:absolute;left:375.8px;top:52.2px;font-size:8.5px;color:#222;white-space:nowrap">NO</div>
<div style="position:absolute;right:98.7px;top:52.2px;font-size:8.5px;color:#222;white-space:nowrap">59.50343704223633</div>
<div style="position:absolute;right:32.8px;top:52.2px;font-size:8.5px;color:#222;white-space:nowrap">40</div>
<div style="position:absolute;left:0;top:81.7px;width:617.9px;height:1px;background:#e3e5f3"></div>
<div style="position:absolute;left:0;top:81.7px;width:11.8px;height:1px;background:#d0d4e2"></div>
<div style="position:absolute;left:15.3px;top:68.5px;font-size:8.5px;color:#222;white-space:nowrap">J006_2D</div>
<div style="position:absolute;right:478.1px;top:68.5px;font-size:8.5px;color:#222;white-space:nowrap">11878554.371949404</div>
<div style="position:absolute;left:146.8px;top:68.5px;font-size:8.5px;color:#222;white-space:nowrap">6999678.580111653</div>
<div style="position:absolute;left:329.3px;top:68.5px;font-size:8.5px;color:#222;white-space:nowrap">NO</div>
<div style="position:absolute;left:375.8px;top:68.5px;font-size:8.5px;color:#222;white-space:nowrap">NO</div>
<div style="position:absolute;right:98.7px;top:68.5px;font-size:8.5px;color:#222;white-space:nowrap">59.65562438964844</div>
<div style="position:absolute;right:32.8px;top:68.5px;font-size:8.5px;color:#222;white-space:nowrap">40</div>
<div style="position:absolute;left:0;top:98.0px;width:617.9px;height:1px;background:#e3e5f3"></div>
<div style="position:absolute;left:0;top:98.0px;width:11.8px;height:1px;background:#d0d4e2"></div>
<div style="position:absolute;left:15.3px;top:84.8px;font-size:8.5px;color:#222;white-space:nowrap">J007_2D</div>
<div style="position:absolute;right:478.1px;top:84.8px;font-size:8.5px;color:#222;white-space:nowrap">11877904.37194936</div>
<div style="position:absolute;left:146.8px;top:84.8px;font-size:8.5px;color:#222;white-space:nowrap">6999765.182652041</div>
<div style="position:absolute;left:329.3px;top:84.8px;font-size:8.5px;color:#222;white-space:nowrap">NO</div>
<div style="position:absolute;left:375.8px;top:84.8px;font-size:8.5px;color:#222;white-space:nowrap">NO</div>
<div style="position:absolute;right:98.7px;top:84.8px;font-size:8.5px;color:#222;white-space:nowrap">61.77946090698242</div>
<div style="position:absolute;right:32.8px;top:84.8px;font-size:8.5px;color:#222;white-space:nowrap">40</div>
<div style="position:absolute;left:0;top:114.3px;width:617.9px;height:1px;background:#e3e5f3"></div>
<div style="position:absolute;left:0;top:114.3px;width:11.8px;height:1px;background:#d0d4e2"></div>
<div style="position:absolute;left:15.3px;top:101.1px;font-size:8.5px;color:#222;white-space:nowrap">J008_2D</div>
<div style="position:absolute;right:478.1px;top:101.1px;font-size:8.5px;color:#222;white-space:nowrap">11878004.371949404</div>
<div style="position:absolute;left:146.8px;top:101.1px;font-size:8.5px;color:#222;white-space:nowrap">6999765.182652041</div>
<div style="position:absolute;left:329.3px;top:101.1px;font-size:8.5px;color:#222;white-space:nowrap">NO</div>
<div style="position:absolute;left:375.8px;top:101.1px;font-size:8.5px;color:#222;white-space:nowrap">NO</div>
<div style="position:absolute;right:98.7px;top:101.1px;font-size:8.5px;color:#222;white-space:nowrap">58.923057556152344</div>
<div style="position:absolute;right:32.8px;top:101.1px;font-size:8.5px;color:#222;white-space:nowrap">40</div>
<div style="position:absolute;left:0;top:130.6px;width:617.9px;height:1px;background:#e3e5f3"></div>
<div style="position:absolute;left:0;top:130.6px;width:11.8px;height:1px;background:#d0d4e2"></div>
<div style="position:absolute;left:15.3px;top:117.4px;font-size:8.5px;color:#222;white-space:nowrap">J009_2D</div>
<div style="position:absolute;right:478.1px;top:117.4px;font-size:8.5px;color:#222;white-space:nowrap">11878104.37194939</div>
<div style="position:absolute;left:146.8px;top:117.4px;font-size:8.5px;color:#222;white-space:nowrap">6999765.182652041</div>
<div style="position:absolute;left:329.3px;top:117.4px;font-size:8.5px;color:#222;white-space:nowrap">NO</div>
<div style="position:absolute;left:375.8px;top:117.4px;font-size:8.5px;color:#222;white-space:nowrap">NO</div>
<div style="position:absolute;right:98.7px;top:117.4px;font-size:8.5px;color:#222;white-space:nowrap">51.04283905029297</div>
<div style="position:absolute;right:32.8px;top:117.4px;font-size:8.5px;color:#222;white-space:nowrap">40</div>
<div style="position:absolute;left:0;top:146.9px;width:617.9px;height:1px;background:#e3e5f3"></div>
<div style="position:absolute;left:0;top:146.9px;width:11.8px;height:1px;background:#d0d4e2"></div>
<div style="position:absolute;left:15.3px;top:133.7px;font-size:8.5px;color:#222;white-space:nowrap">J010_2D</div>
<div style="position:absolute;right:478.1px;top:133.7px;font-size:8.5px;color:#222;white-space:nowrap">11878204.37194939</div>
<div style="position:absolute;left:146.8px;top:133.7px;font-size:8.5px;color:#222;white-space:nowrap">6999765.182652041</div>
<div style="position:absolute;left:329.3px;top:133.7px;font-size:8.5px;color:#222;white-space:nowrap">NO</div>
<div style="position:absolute;left:375.8px;top:133.7px;font-size:8.5px;color:#222;white-space:nowrap">NO</div>
<div style="position:absolute;right:98.7px;top:133.7px;font-size:8.5px;color:#222;white-space:nowrap">46.69670867919922</div>
<div style="position:absolute;right:32.8px;top:133.7px;font-size:8.5px;color:#222;white-space:nowrap">40</div>
<div style="position:absolute;left:0;top:163.2px;width:617.9px;height:1px;background:#e3e5f3"></div>
<div style="position:absolute;left:0;top:163.2px;width:11.8px;height:1px;background:#d0d4e2"></div>
<div style="position:absolute;left:15.3px;top:150.0px;font-size:8.5px;color:#222;white-space:nowrap">J011_2D</div>
<div style="position:absolute;right:478.1px;top:150.0px;font-size:8.5px;color:#222;white-space:nowrap">11878304.371949375</div>
<div style="position:absolute;left:146.8px;top:150.0px;font-size:8.5px;color:#222;white-space:nowrap">6999765.182652041</div>
<div style="position:absolute;left:329.3px;top:150.0px;font-size:8.5px;color:#222;white-space:nowrap">NO</div>
<div style="position:absolute;left:375.8px;top:150.0px;font-size:8.5px;color:#222;white-space:nowrap">NO</div>
<div style="position:absolute;right:98.7px;top:150.0px;font-size:8.5px;color:#222;white-space:nowrap">58.497432708740234</div>
<div style="position:absolute;right:32.8px;top:150.0px;font-size:8.5px;color:#222;white-space:nowrap">40</div>
<div style="position:absolute;left:0;top:179.5px;width:617.9px;height:1px;background:#e3e5f3"></div>
<div style="position:absolute;left:0;top:179.5px;width:11.8px;height:1px;background:#d0d4e2"></div>
<div style="position:absolute;left:15.3px;top:166.3px;font-size:8.5px;color:#222;white-space:nowrap">J012_2D</div>
<div style="position:absolute;right:478.1px;top:166.3px;font-size:8.5px;color:#222;white-space:nowrap">11878404.37194942</div>
<div style="position:absolute;left:146.8px;top:166.3px;font-size:8.5px;color:#222;white-space:nowrap">6999765.182652041</div>
<div style="position:absolute;left:329.3px;top:166.3px;font-size:8.5px;color:#222;white-space:nowrap">NO</div>
<div style="position:absolute;left:375.8px;top:166.3px;font-size:8.5px;color:#222;white-space:nowrap">NO</div>
<div style="position:absolute;right:98.7px;top:166.3px;font-size:8.5px;color:#222;white-space:nowrap">60.12649154663086</div>
<div style="position:absolute;right:32.8px;top:166.3px;font-size:8.5px;color:#222;white-space:nowrap">40</div>
<div style="position:absolute;left:0;top:195.8px;width:617.9px;height:1px;background:#e3e5f3"></div>
<div style="position:absolute;left:0;top:195.8px;width:11.8px;height:1px;background:#d0d4e2"></div>
<div style="position:absolute;left:15.3px;top:182.6px;font-size:8.5px;color:#222;white-space:nowrap">J013_2D</div>
<div style="position:absolute;right:478.1px;top:182.6px;font-size:8.5px;color:#222;white-space:nowrap">11878504.371949404</div>
<div style="position:absolute;left:146.8px;top:182.6px;font-size:8.5px;color:#222;white-space:nowrap">6999765.182652041</div>
<div style="position:absolute;left:329.3px;top:182.6px;font-size:8.5px;color:#222;white-space:nowrap">NO</div>
<div style="position:absolute;left:375.8px;top:182.6px;font-size:8.5px;color:#222;white-space:nowrap">NO</div>
<div style="position:absolute;right:98.7px;top:182.6px;font-size:8.5px;color:#222;white-space:nowrap">61.563133239746094</div>
<div style="position:absolute;right:32.8px;top:182.6px;font-size:8.5px;color:#222;white-space:nowrap">40</div>
<div style="position:absolute;left:0;top:212.1px;width:617.9px;height:1px;background:#e3e5f3"></div>
<div style="position:absolute;left:0;top:212.1px;width:11.8px;height:1px;background:#d0d4e2"></div>
<div style="position:absolute;left:15.3px;top:198.9px;font-size:8.5px;color:#222;white-space:nowrap">J014_2D</div>
<div style="position:absolute;right:478.1px;top:198.9px;font-size:8.5px;color:#222;white-space:nowrap">11878604.37194939</div>
<div style="position:absolute;left:146.8px;top:198.9px;font-size:8.5px;color:#222;white-space:nowrap">6999765.182652041</div>
<div style="position:absolute;left:329.3px;top:198.9px;font-size:8.5px;color:#222;white-space:nowrap">NO</div>
<div style="position:absolute;left:375.8px;top:198.9px;font-size:8.5px;color:#222;white-space:nowrap">NO</div>
<div style="position:absolute;right:98.7px;top:198.9px;font-size:8.5px;color:#222;white-space:nowrap">61.36136245727539</div>
<div style="position:absolute;right:32.8px;top:198.9px;font-size:8.5px;color:#222;white-space:nowrap">40</div>
<div style="position:absolute;left:0;top:228.4px;width:617.9px;height:1px;background:#e3e5f3"></div>
<div style="position:absolute;left:0;top:228.4px;width:11.8px;height:1px;background:#d0d4e2"></div>
<div style="position:absolute;left:15.3px;top:215.2px;font-size:8.5px;color:#222;white-space:nowrap">J015_2D</div>
<div style="position:absolute;right:478.1px;top:215.2px;font-size:8.5px;color:#222;white-space:nowrap">11878704.371949375</div>
<div style="position:absolute;left:146.8px;top:215.2px;font-size:8.5px;color:#222;white-space:nowrap">6999765.182652041</div>
<div style="position:absolute;left:329.3px;top:215.2px;font-size:8.5px;color:#222;white-space:nowrap">NO</div>
<div style="position:absolute;left:375.8px;top:215.2px;font-size:8.5px;color:#222;white-space:nowrap">NO</div>
<div style="position:absolute;right:98.7px;top:215.2px;font-size:8.5px;color:#222;white-space:nowrap">62.51112265722656</div>
<div style="position:absolute;right:32.8px;top:215.2px;font-size:8.5px;color:#222;white-space:nowrap">40</div>
</div>
<div class="a" style="left:550.2px;top:351.5px;width:1px;height:221.20000000000005px;background:#e3e5f3"></div>
<div class="a" style="left:681.2px;top:351.5px;width:1px;height:221.20000000000005px;background:#e3e5f3"></div>
<div class="a" style="left:766.6px;top:351.5px;width:1px;height:221.20000000000005px;background:#e3e5f3"></div>
<div class="a" style="left:831.5px;top:351.5px;width:1px;height:221.20000000000005px;background:#e3e5f3"></div>
<div class="a" style="left:864.2px;top:351.5px;width:1px;height:221.20000000000005px;background:#e3e5f3"></div>
<div class="a" style="left:911.3px;top:351.5px;width:1px;height:221.20000000000005px;background:#e3e5f3"></div>
<div class="a" style="left:970.8px;top:351.5px;width:1px;height:221.20000000000005px;background:#e3e5f3"></div>
<div class="a" style="left:1060.7px;top:351.5px;width:1px;height:221.20000000000005px;background:#e3e5f3"></div>
<div class="a" style="left:1126.5px;top:351.5px;width:1px;height:221.20000000000005px;background:#e3e5f3"></div>
<div class="a" style="left:550.2px;top:351.5px;width:1px;height:221.20000000000005px;background:#c9cfe2"></div>
<svg class="a" style="left:542.8px;top:355.5px" width="5" height="8"><path d="M0.8 0.8l3 3.2-3 3.2" fill="none" stroke="#4b5c9c" stroke-width="1.3"/></svg>
<div class="a" style="left:1156.3px;top:351.5px;width:12.5px;height:220.5px;background:linear-gradient(90deg,#eef6fc,#fff 40%,#e9f3fb);border-left:1px solid #d3e3f1"></div>
<div class="a" style="left:1156.8px;top:352px;width:11.8px;height:10.5px;background:linear-gradient(90deg,#d5e8f7,#f2f8fd 50%,#cfe4f5);border:1px solid #a9c8e4;border-radius:2px"></div>
<svg class="a" style="left:1159.5px;top:354.5px" width="7" height="5"><path d="M0.5 4l3-3 3 3" fill="none" stroke="#2c5d95" stroke-width="1.3"/></svg>
<div class="a" style="left:1156.8px;top:364.3px;width:11.8px;height:14px;background:linear-gradient(90deg,#cfe4f5,#eaf4fc 50%,#c8e0f3);border:1px solid #a9c8e4;border-radius:2px"></div>
<div class="a" style="left:1160px;top:369px;width:5px;height:3.5px;border-top:1px solid #7a9ab8;border-bottom:1px solid #7a9ab8"></div>
<div class="a" style="left:1156.8px;top:561px;width:11.8px;height:10.5px;background:linear-gradient(90deg,#d5e8f7,#f2f8fd 50%,#cfe4f5);border:1px solid #a9c8e4;border-radius:2px"></div>
<svg class="a" style="left:1159.5px;top:563.8px" width="7" height="5"><path d="M0.5 1l3 3 3-3" fill="none" stroke="#2c5d95" stroke-width="1.3"/></svg>
<div class="a" style="left:538.4px;top:572.7px;width:617.9px;height:13px;background:linear-gradient(#f4f9fd,#ffffff 50%,#eef5fb);border-top:1px solid #d3e3f1"></div>
<div class="a" style="left:539.5px;top:573.2px;width:10px;height:12.3px;background:linear-gradient(#d5e8f7,#f2f8fd 50%,#cfe4f5);border:1px solid #a9c8e4;border-radius:2px"></div>
<svg class="a" style="left:542px;top:575.8px" width="5" height="7"><path d="M4 0.5l-3 3 3 3" fill="none" stroke="#2c5d95" stroke-width="1.3"/></svg>
<div class="a" style="left:550.5px;top:573.2px;width:432.5px;height:12.3px;background:linear-gradient(#c2ddf4,#e2f0fb 45%,#b3d4f0);border:1px solid #98bde0;border-radius:2px"></div>
<div class="a" style="left:765px;top:576.5px;width:3.5px;height:5px;border-left:1px solid #7a9ab8;border-right:1px solid #7a9ab8"></div>
<div class="a" style="left:1145px;top:573.2px;width:10.5px;height:12.3px;background:linear-gradient(#d5e8f7,#f2f8fd 50%,#cfe4f5);border:1px solid #a9c8e4;border-radius:2px"></div>
<svg class="a" style="left:1148px;top:575.8px" width="5" height="7"><path d="M1 0.5l3 3-3 3" fill="none" stroke="#2c5d95" stroke-width="1.3"/></svg>
<div class="a" style="left:1156.3px;top:572.7px;width:12.7px;height:13px;background:#f3f4f7"></div>
<div class="a" style="left:810.4px;top:605.8px;width:21.800000000000068px;height:19px;background:linear-gradient(#eef6fd,#d9eaf8 50%,#c9e0f4);border:1px solid #8fb3d6;border-radius:3px"></div>
<div class="a" style="left:814px;top:610px;width:14px;height:11px;background:#5aa4e6;border:1px solid #2f7ac4"></div><div class="a" style="left:815px;top:613px;width:12px;height:1px;background:#cfe6fa"></div><div class="a" style="left:815px;top:616.5px;width:12px;height:1px;background:#cfe6fa"></div>
<div class="a" style="left:840.4px;top:605.8px;width:22.300000000000068px;height:19px;background:linear-gradient(#eef6fd,#d9eaf8 50%,#c9e0f4);border:1px solid #8fb3d6;border-radius:3px"></div>
<div class="a" style="left:844px;top:609.5px;width:14px;height:9px;background:#3d8ed8;border:1px solid #2f6fb4"></div><div class="a" style="left:845px;top:612px;width:12px;height:1px;background:#a8d0f4;opacity:.8"></div>
<div class="a" style="left:870.7px;top:615.3px;font-size:8.5px;color:#222">(0 out of 142 Selected)</div>
<div class="a" style="left:978.6px;top:605.8px;width:57.80000000000007px;height:19px;background:linear-gradient(#eef6fd,#d9eaf8 50%,#c9e0f4);border:1px solid #8fb3d6;border-radius:3px"></div><div class="a" style="left:978.6px;width:57.80000000000007px;top:611.2px;font-size:8.6px;color:#111;text-align:center">OK</div>
<div class="a" style="left:1044.7px;top:605.8px;width:57.799999999999955px;height:19px;background:linear-gradient(#eef6fd,#d9eaf8 50%,#c9e0f4);border:1px solid #8fb3d6;border-radius:3px"></div><div class="a" style="left:1044.7px;width:57.799999999999955px;top:611.2px;font-size:8.6px;color:#111;text-align:center">Cancel</div>
<div class="a" style="left:1110.6px;top:605.8px;width:58.40000000000009px;height:19px;background:linear-gradient(#eef6fd,#d9eaf8 50%,#c9e0f4);border:1px solid #8fb3d6;border-radius:3px"></div><div class="a" style="left:1110.6px;width:58.40000000000009px;top:611.2px;font-size:8.6px;color:#111;text-align:center">Help</div>
<svg class="a" style="left:1168px;top:620.5px" width="10" height="10"><path d="M9.5 1L1 9.5M9.5 4L4 9.5M9.5 7L7 9.5" stroke="#8a94c0" stroke-width="1"/></svg>
<div class="a" style="left:1313.5px;top:454.3px;width:31.2px;height:26.5px;border:2.3px solid #f01010"></div>
</body></html>
